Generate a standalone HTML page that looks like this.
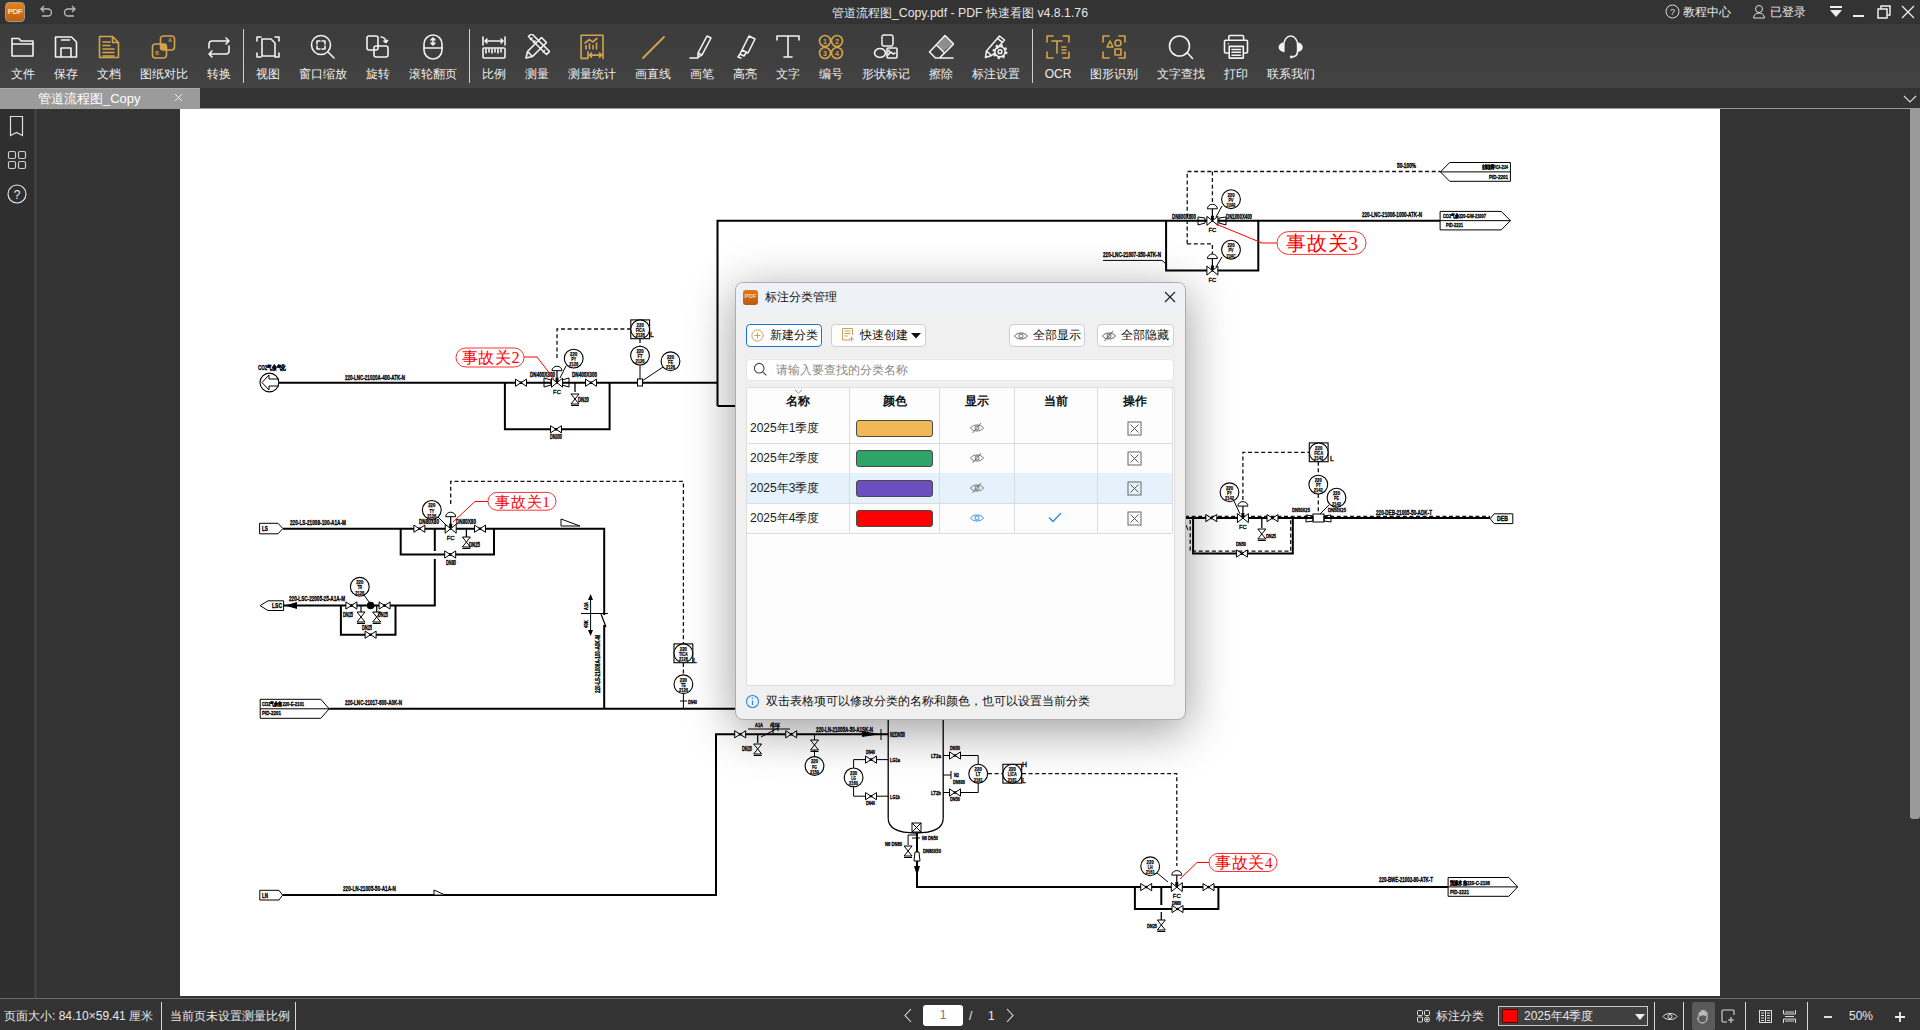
<!DOCTYPE html>
<html><head><meta charset="utf-8">
<style>
*{margin:0;padding:0;box-sizing:border-box}
html,body{width:1920px;height:1030px;overflow:hidden;background:#333;font-family:"Liberation Sans",sans-serif;position:relative}
.abs{position:absolute}
.tb{position:absolute;top:24px;height:64px;text-align:center;color:#efefef;font-size:12px;line-height:16px}
.tb svg{position:absolute}
.tb span{position:absolute;left:0;right:0;top:42px;white-space:nowrap}
</style></head><body>
<div class="abs" style="left:0;top:0;width:1920px;height:24px;background:#333"></div>
<div class="abs" style="left:0;top:24px;width:1920px;height:64px;background:linear-gradient(#3b3b3b,#434343)"></div>
<div class="abs" style="left:0;top:88px;width:1920px;height:21px;background:#333"></div>
<div class="abs" style="left:0;top:88px;width:200px;height:21px;background:#9b9b9b;border-top:1px solid #aaa"></div>
<div class="abs" style="left:0;top:109px;width:34px;height:889px;background:#2f2f2f"></div>
<div class="abs" style="left:34px;top:109px;width:3px;height:889px;background:#404040"></div>
<div class="abs" style="left:37px;top:109px;width:1883px;height:889px;background:#333"></div>
<div class="abs" style="left:180px;top:109px;width:1540px;height:887px;background:#fff"></div>
<div class="abs" style="left:0;top:998px;width:1920px;height:32px;background:#333;border-top:1px solid #6b6b6b"></div>

<div class="abs" style="left:5px;top:2px;width:20px;height:20px;border-radius:4px;background:linear-gradient(#e8801a,#c0600c);border:1px solid #999"></div>
<div class="abs" style="left:5px;top:7px;width:20px;text-align:center;font-size:8px;font-weight:bold;color:#f4e0c8;letter-spacing:-0.5px">PDF</div>
<svg class="abs" style="left:38px;top:4px" width="16" height="16" viewBox="0 0 16 16"><path d="M3 5h7a3.5 3.5 0 0 1 0 7H4 M6 2L3 5l3 3" fill="none" stroke="#bbb" stroke-width="1.3"/></svg>
<svg class="abs" style="left:62px;top:4px" width="16" height="16" viewBox="0 0 16 16"><path d="M13 5H6a3.5 3.5 0 0 0 0 7h6 M10 2l3 3-3 3" fill="none" stroke="#bbb" stroke-width="1.3"/></svg>
<div class="abs" style="left:660px;width:600px;top:5px;text-align:center;font-size:12.3px;color:#e6e6e6;line-height:16px">管道流程图_Copy.pdf - PDF 快速看图 v4.8.1.76</div>
<svg class="abs" style="left:1665px;top:4px" width="15" height="15" viewBox="0 0 15 15"><circle cx="7.5" cy="7.5" r="6.5" fill="none" stroke="#ddd" stroke-width="1"/><text x="7.5" y="11" font-size="9" fill="#ddd" text-anchor="middle" font-family="Liberation Sans">?</text></svg>
<div class="abs" style="left:1683px;top:4px;font-size:12px;color:#e6e6e6;line-height:16px">教程中心</div>
<svg class="abs" style="left:1752px;top:4px" width="14" height="15" viewBox="0 0 14 15"><circle cx="7" cy="5" r="3.5" fill="none" stroke="#ddd"/><path d="M1.5 14c0-3 2.5-5 5.5-5s5.5 2 5.5 5z" fill="none" stroke="#ddd"/></svg>
<div class="abs" style="left:1770px;top:4px;font-size:12px;color:#e6e6e6;line-height:16px">已登录</div>
<svg class="abs" style="left:1829px;top:5px" width="14" height="14" viewBox="0 0 14 14"><rect x="1" y="1" width="12" height="2" fill="#eee"/><path d="M1 5h12l-6 7z" fill="#eee"/></svg>
<div class="abs" style="left:1853px;top:15px;width:11px;height:2px;background:#eee"></div>
<svg class="abs" style="left:1877px;top:5px" width="14" height="14" viewBox="0 0 14 14"><path d="M4 4V1h9v9h-3 M1 4h9v9H1z" fill="none" stroke="#eee" stroke-width="1.5"/></svg>
<svg class="abs" style="left:1901px;top:5px" width="14" height="14" viewBox="0 0 14 14"><path d="M1 1l12 12M13 1L1 13" stroke="#eee" stroke-width="1.3"/></svg>
<div class="tb" style="left:-17.5px;width:80px"><svg width="26" height="26" viewBox="0 0 26 26" style="left:27px;top:10px"><path fill="none" stroke="#f2f2f2" stroke-width="1.6" stroke-linejoin="round" stroke-linecap="round" d="M2 4.5h7l2 2.5h12v15H2z M2 10h21"/></svg><span>文件</span></div><div class="tb" style="left:26px;width:80px"><svg width="26" height="26" viewBox="0 0 26 26" style="left:27px;top:10px"><path fill="none" stroke="#f2f2f2" stroke-width="1.6" stroke-linejoin="round" stroke-linecap="round" d="M2.5 3h16l5 5v15h-21z M8 23v-9h10v9 M8.5 6h8"/></svg><span>保存</span></div><div class="tb" style="left:69px;width:80px"><svg width="26" height="26" viewBox="0 0 26 26" style="left:27px;top:10px"><path fill="none" stroke="#d3a44a" stroke-width="1.6" stroke-linejoin="round" stroke-linecap="round" d="M3.5 2.5h13l6 6v15h-19z M16.5 2.5v6h6"/><path fill="none" stroke="#d3a44a" stroke-width="1.6" stroke-linejoin="round" stroke-linecap="round" d="M7 8h7M7 11.5h7M7 15h11M7 18.5h11M7 22h11" stroke-width="1.4"/></svg><span>文档</span></div><div class="tb" style="left:123.5px;width:80px"><svg width="26" height="26" viewBox="0 0 26 26" style="left:27px;top:10px"><rect fill="none" stroke="#d3a44a" stroke-width="1.6" stroke-linejoin="round" stroke-linecap="round" x="9.5" y="2" width="14" height="14" rx="3"/><rect fill="none" stroke="#d3a44a" stroke-width="1.6" stroke-linejoin="round" stroke-linecap="round" x="1.5" y="10" width="14" height="14" rx="3"/><rect x="9.5" y="10" width="6" height="6" fill="#d3a44a"/><text x="19" y="8" font-size="5" fill="#d3a44a" font-family="Liberation Sans" text-anchor="middle" font-weight="bold">A</text><text x="6" y="21" font-size="5" fill="#d3a44a" font-family="Liberation Sans" text-anchor="middle" font-weight="bold">B</text></svg><span>图纸对比</span></div><div class="tb" style="left:178.5px;width:80px"><svg width="26" height="26" viewBox="0 0 26 26" style="left:27px;top:10px"><path fill="none" stroke="#f2f2f2" stroke-width="1.6" stroke-linejoin="round" stroke-linecap="round" d="M3 14v-4a3 3 0 0 1 3-3h17 M20 4l3 3-3 3 M23 12v5a3 3 0 0 1-3 3H3 M6 17l-3 3 3 3"/></svg><span>转换</span></div><div class="tb" style="left:227.5px;width:80px"><svg width="26" height="26" viewBox="0 0 26 26" style="left:27px;top:10px"><path fill="none" stroke="#f2f2f2" stroke-width="1.6" stroke-linejoin="round" stroke-linecap="round" d="M2 7V3h4M20 3h4v4M24 19v4h-4M6 23H2v-4 M7 5h9l4 4v13H7z"/></svg><span>视图</span></div><div class="tb" style="left:282.5px;width:80px"><svg width="26" height="26" viewBox="0 0 26 26" style="left:27px;top:10px"><circle fill="none" stroke="#f2f2f2" stroke-width="1.6" stroke-linejoin="round" stroke-linecap="round" cx="11" cy="11" r="9.5"/><path fill="none" stroke="#f2f2f2" stroke-width="1.6" stroke-linejoin="round" stroke-linecap="round" d="M18 18l6 6 M7 10V7h3M12 7h3v3M15 12v3h-3M10 15H7v-3"/></svg><span>窗口缩放</span></div><div class="tb" style="left:337.5px;width:80px"><svg width="26" height="26" viewBox="0 0 26 26" style="left:27px;top:10px"><rect fill="none" stroke="#f2f2f2" stroke-width="1.6" stroke-linejoin="round" stroke-linecap="round" x="2" y="2" width="11" height="14" rx="2"/><rect fill="none" stroke="#f2f2f2" stroke-width="1.6" stroke-linejoin="round" stroke-linecap="round" x="9" y="12" width="14" height="11" rx="2"/><path fill="none" stroke="#f2f2f2" stroke-width="1.6" stroke-linejoin="round" stroke-linecap="round" d="M16 3a5 5 0 0 1 5 5 M19 7l2 1.5 1.5-2"/></svg><span>旋转</span></div><div class="tb" style="left:392.5px;width:80px"><svg width="26" height="26" viewBox="0 0 26 26" style="left:27px;top:10px"><rect fill="none" stroke="#f2f2f2" stroke-width="1.6" stroke-linejoin="round" stroke-linecap="round" x="4" y="1" width="18" height="24" rx="9"/><path fill="none" stroke="#f2f2f2" stroke-width="1.6" stroke-linejoin="round" stroke-linecap="round" d="M4 14h18 M13 4v7 M11 6l2-2 2 2 M11 9l2 2 2-2"/></svg><span>滚轮翻页</span></div><div class="tb" style="left:454px;width:80px"><svg width="26" height="26" viewBox="0 0 26 26" style="left:27px;top:10px"><path fill="none" stroke="#f2f2f2" stroke-width="1.6" stroke-linejoin="round" stroke-linecap="round" d="M2 3v8M24 3v8 M4 7h18 M6 5l-2 2 2 2M20 5l2 2-2 2"/><rect fill="none" stroke="#f2f2f2" stroke-width="1.6" stroke-linejoin="round" stroke-linecap="round" x="2" y="14" width="22" height="10" rx="1"/><path fill="none" stroke="#f2f2f2" stroke-width="1.6" stroke-linejoin="round" stroke-linecap="round" d="M5 15v4M8 15v3M11 15v4M14 15v3M17 15v4M20 15v3" stroke-width="1.2"/></svg><span>比例</span></div><div class="tb" style="left:497px;width:80px"><svg width="26" height="26" viewBox="0 0 26 26" style="left:27px;top:10px"><path fill="none" stroke="#f2f2f2" stroke-width="1.6" stroke-linejoin="round" stroke-linecap="round" d="M4.5 2.5l3-3 18 18-3 3z M6.5 5.5l1.5-1.5 M9.5 8.5l1.5-1.5 M16 15l1.5-1.5 M19 18l1.5-1.5"/><path fill="none" stroke="#f2f2f2" stroke-width="1.6" stroke-linejoin="round" stroke-linecap="round" d="M2 24l1.5-6.5L17.5 3.5l5 5-14 14z M3.5 17.5l5 5"/></svg><span>测量</span></div><div class="tb" style="left:552px;width:80px"><svg width="26" height="26" viewBox="0 0 26 26" style="left:27px;top:10px"><path fill="none" stroke="#d3a44a" stroke-width="1.6" stroke-linejoin="round" stroke-linecap="round" d="M8.5 24.4H2.1V1.3H24V16.5 M9 17.8V24.4 M24 17.8V24.4 M10.5 21.1H22.5 M12.5 19.1l-2 2 2 2 M20.5 19.1l2 2-2 2 M6 9l4.5-3.5 3 2.5 4.5-3.5"/><path fill="none" stroke="#d3a44a" stroke-width="1.6" stroke-linejoin="round" stroke-linecap="round" d="M7 11.5v3.5 M10.5 10v5 M14 11.5v3.5 M17.5 9v6" stroke-width="1.8" stroke-linecap="butt"/></svg><span>测量统计</span></div><div class="tb" style="left:613px;width:80px"><svg width="26" height="26" viewBox="0 0 26 26" style="left:27px;top:10px"><path fill="none" stroke="#d3a44a" stroke-width="1.8" stroke-linecap="round" d="M3 24L24 3"/></svg><span>画直线</span></div><div class="tb" style="left:662px;width:80px"><svg width="26" height="26" viewBox="0 0 26 26" style="left:27px;top:10px"><path fill="none" stroke="#f2f2f2" stroke-width="1.6" stroke-linejoin="round" stroke-linecap="round" d="M18 2l4 2-9 17-4 2 0-4z M9 19l4 2 M1 24h8"/></svg><span>画笔</span></div><div class="tb" style="left:705px;width:80px"><svg width="26" height="26" viewBox="0 0 26 26" style="left:27px;top:10px"><path fill="none" stroke="#f2f2f2" stroke-width="1.6" stroke-linejoin="round" stroke-linecap="round" d="M17 2l6 3-7 14-6-3z M10 16l-2 4 4 2 2-3 M8 20l-2 3 3 1"/></svg><span>高亮</span></div><div class="tb" style="left:748px;width:80px"><svg width="26" height="26" viewBox="0 0 26 26" style="left:27px;top:10px"><path fill="none" stroke="#f2f2f2" stroke-width="1.6" stroke-linejoin="round" stroke-linecap="round" d="M2 6V2h22v4 M13 2v21 M9 23h8"/></svg><span>文字</span></div><div class="tb" style="left:791px;width:80px"><svg width="26" height="26" viewBox="0 0 26 26" style="left:27px;top:10px"><g fill="none" stroke="#d3a44a" stroke-width="1.6" stroke-linejoin="round" stroke-linecap="round"><circle cx="7" cy="7" r="5.5"/><circle cx="19" cy="7" r="5.5"/><circle cx="7" cy="19" r="5.5"/><circle cx="19" cy="19" r="5.5"/></g><g fill="#d3a44a" font-size="7" font-family="Liberation Sans" text-anchor="middle" font-weight="bold"><text x="7" y="9.5">1</text><text x="19" y="9.5">2</text><text x="7" y="21.5">3</text><text x="19" y="21.5">4</text></g></svg><span>编号</span></div><div class="tb" style="left:846px;width:80px"><svg width="26" height="26" viewBox="0 0 26 26" style="left:27px;top:10px"><rect fill="none" stroke="#f2f2f2" stroke-width="1.6" stroke-linejoin="round" stroke-linecap="round" x="9" y="1" width="11" height="11" rx="2" stroke-dasharray="1.5 1"/><ellipse fill="none" stroke="#f2f2f2" stroke-width="1.6" stroke-linejoin="round" stroke-linecap="round" cx="7" cy="19" rx="5.5" ry="4.5"/><rect fill="none" stroke="#f2f2f2" stroke-width="1.6" stroke-linejoin="round" stroke-linecap="round" x="14" y="14" width="10" height="10" rx="1"/><path fill="none" stroke="#f2f2f2" stroke-width="1.6" stroke-linejoin="round" stroke-linecap="round" d="M15 21l3-3 2 2 2-1 M16 16v2" stroke-width="1.2"/></svg><span>形状标记</span></div><div class="tb" style="left:901px;width:80px"><svg width="26" height="26" viewBox="0 0 26 26" style="left:27px;top:10px"><path fill="none" stroke="#f2f2f2" stroke-width="1.6" stroke-linejoin="round" stroke-linecap="round" d="M17 1.5L25.5 10 11.5 24H7.5L1.5 18Z M8.5 11L15.5 18 M11.5 24H25"/><path d="M17 2.5L24.5 10 15.5 17.2 9.3 11Z" fill="#f2f2f2" opacity=".45"/></svg><span>擦除</span></div><div class="tb" style="left:956px;width:80px"><svg width="26" height="26" viewBox="0 0 26 26" style="left:27px;top:10px"><path fill="none" stroke="#f2f2f2" stroke-width="1.6" stroke-linejoin="round" stroke-linecap="round" d="M2.5 23.5L3.5 17 16.5 2 21.5 6 14 14.5 M3.5 17L8 21 M2.5 23.5L8.5 21.5 11 19.5 M14.5 4.3L19.5 8.3"/><circle cx="17" cy="17.7" r="5.2" fill="none" stroke="#f2f2f2" stroke-width="1.6"/><circle cx="17" cy="17.7" r="6.4" fill="none" stroke="#f2f2f2" stroke-width="2.2" stroke-dasharray="2.2 2.8"/><circle cx="17" cy="17.7" r="1.9" fill="none" stroke="#f2f2f2" stroke-width="1.5"/></svg><span>标注设置</span></div><div class="tb" style="left:1018px;width:80px"><svg width="26" height="26" viewBox="0 0 26 26" style="left:27px;top:10px"><path fill="none" stroke="#d3a44a" stroke-width="1.6" stroke-linejoin="round" stroke-linecap="round" d="M2 8V2h6M18 2h6v6M24 18v6h-6M8 24H2v-6 M7 7h10 M12 7v12 M17 13h4M17 16h4M17 19h4"/></svg><span>OCR</span></div><div class="tb" style="left:1074px;width:80px"><svg width="26" height="26" viewBox="0 0 26 26" style="left:27px;top:10px"><path fill="none" stroke="#d3a44a" stroke-width="1.6" stroke-linejoin="round" stroke-linecap="round" d="M2 8V2h6M18 2h6v6M24 18v6h-6M8 24H2v-6 M6 13l3-6 3 6z"/><circle fill="none" stroke="#d3a44a" stroke-width="1.6" stroke-linejoin="round" stroke-linecap="round" cx="17" cy="9" r="3"/><rect fill="none" stroke="#d3a44a" stroke-width="1.6" stroke-linejoin="round" stroke-linecap="round" x="14" y="15" width="6" height="6"/></svg><span>图形识别</span></div><div class="tb" style="left:1141px;width:80px"><svg width="26" height="26" viewBox="0 0 26 26" style="left:27px;top:10px"><circle fill="none" stroke="#f2f2f2" stroke-width="1.6" stroke-linejoin="round" stroke-linecap="round" cx="11.5" cy="12" r="10"/><path fill="none" stroke="#f2f2f2" stroke-width="1.6" stroke-linejoin="round" stroke-linecap="round" d="M19 18.5l5.5 6"/></svg><span>文字查找</span></div><div class="tb" style="left:1196px;width:80px"><svg width="26" height="26" viewBox="0 0 26 26" style="left:27px;top:10px"><path fill="none" stroke="#f2f2f2" stroke-width="1.6" stroke-linejoin="round" stroke-linecap="round" d="M5.8 6.2V2.5a1 1 0 0 1 1-1h12.8a1 1 0 0 1 1 1v3.7 M6 19H2.5a1 1 0 0 1-1-1V7.2a1 1 0 0 1 1-1h21a1 1 0 0 1 1 1V18a1 1 0 0 1-1 1H20.5 M6.2 12.4h14.1v11.7H6.2z M9 15.5h8.5M9 18.3h8.5M9 21.2h8.5"/><circle cx="5.4" cy="9.7" r=".7" fill="#f2f2f2"/></svg><span>打印</span></div><div class="tb" style="left:1251px;width:80px"><svg width="26" height="26" viewBox="0 0 26 26" style="left:27px;top:10px"><path fill="none" stroke="#f2f2f2" stroke-width="1.6" stroke-linejoin="round" stroke-linecap="round" d="M5.8 17.5V11A6.9 9 0 0 1 19.6 11V17.5 M19.6 17Q19.6 23 13.5 23"/><path d="M5.8 8.5A5.2 4.7 0 0 0 5.8 17.9Z M19.6 8.5A5.2 4.7 0 0 1 19.6 17.9Z" fill="#f2f2f2"/><circle cx="13.3" cy="23" r="1.4" fill="#f2f2f2"/></svg><span>联系我们</span></div><div class="abs" style="left:243px;top:29px;width:1px;height:54px;background:#cfcfcf"></div><div class="abs" style="left:469px;top:29px;width:1px;height:54px;background:#cfcfcf"></div><div class="abs" style="left:1032px;top:29px;width:1px;height:54px;background:#cfcfcf"></div>
<div class="abs" style="left:38px;top:90px;font-size:13px;color:#fff;line-height:18px">管道流程图_Copy</div>
<svg class="abs" style="left:174px;top:93px" width="9" height="9" viewBox="0 0 9 9"><path d="M1 1l7 7M8 1L1 8" stroke="#eee" stroke-width="1"/></svg>
<svg class="abs" style="left:1903px;top:95px" width="14" height="9" viewBox="0 0 14 9"><path d="M1 1l6 6 6-6" fill="none" stroke="#ddd" stroke-width="1.1"/></svg>
<div class="abs" style="left:200px;top:108px;width:1720px;height:1px;background:#9a9a9a"></div>
<div class="abs" style="left:1910px;top:109px;width:10px;height:710px;background:#9a9a9a;border-radius:0 0 3px 3px"></div>

<svg class="abs" style="left:8px;top:115px" width="18" height="22" viewBox="0 0 18 22"><path d="M2.5 1.5h12v19l-6-3-6 3z" fill="none" stroke="#ddd" stroke-width="1.2"/></svg>
<svg class="abs" style="left:7px;top:150px" width="20" height="20" viewBox="0 0 20 20"><g fill="none" stroke="#ccc" stroke-width="1.2"><rect x="1.5" y="1.5" width="7" height="7" rx="1.5"/><rect x="11.5" y="1.5" width="7" height="7" rx="1.5"/><rect x="1.5" y="11.5" width="7" height="7" rx="1.5"/><rect x="11.5" y="11.5" width="7" height="7" rx="1.5"/></g></svg>
<svg class="abs" style="left:7px;top:184px" width="20" height="20" viewBox="0 0 20 20"><circle cx="10" cy="10" r="9" fill="none" stroke="#eee" stroke-width="1.1"/><text x="10" y="14.5" font-size="12" fill="#eee" text-anchor="middle" font-family="Liberation Sans">?</text></svg>

<div class="abs" style="left:4px;top:1008px;font-size:12px;color:#e8e8e8;line-height:16px;white-space:nowrap">页面大小: 84.10×59.41 厘米</div>
<div class="abs" style="left:161px;top:1002px;width:1px;height:28px;background:#d8d8d8"></div>
<div class="abs" style="left:170px;top:1008px;font-size:12px;color:#e8e8e8;line-height:16px;white-space:nowrap">当前页未设置测量比例</div>
<div class="abs" style="left:295px;top:1002px;width:1px;height:28px;background:#d8d8d8"></div>
<svg class="abs" style="left:903px;top:1008px" width="10" height="15" viewBox="0 0 10 15"><path d="M8 1L2 7.5 8 14" fill="none" stroke="#ddd" stroke-width="1.1"/></svg>
<div class="abs" style="left:923px;top:1005px;width:40px;height:21px;background:#fff;border-radius:3px;text-align:center;font-size:12px;line-height:21px;color:#777">1</div>
<div class="abs" style="left:969px;top:1008px;font-size:12px;color:#e8e8e8;line-height:16px">/</div>
<div class="abs" style="left:988px;top:1008px;font-size:12px;color:#e8e8e8;line-height:16px">1</div>
<svg class="abs" style="left:1005px;top:1008px" width="10" height="15" viewBox="0 0 10 15"><path d="M2 1l6 6.5L2 14" fill="none" stroke="#ddd" stroke-width="1.1"/></svg>
<svg class="abs" style="left:1417px;top:1010px" width="14" height="13" viewBox="0 0 14 13"><g fill="none" stroke="#ddd" stroke-width="1"><rect x=".5" y=".5" width="5" height="5" rx="1"/><rect x="7.5" y=".5" width="5" height="5" rx="1"/><rect x=".5" y="7" width="5" height="5" rx="1"/><circle cx="10" cy="9.5" r="2.5"/><path d="M10 8v3M8.5 9.5h3"/></g></svg>
<div class="abs" style="left:1436px;top:1008px;font-size:12px;color:#e8e8e8;line-height:16px;white-space:nowrap">标注分类</div>
<div class="abs" style="left:1498px;top:1006px;width:150px;height:20px;border:1px solid #c8c8c8;background:#404040"></div>
<div class="abs" style="left:1502px;top:1009px;width:16px;height:14px;background:#f00;border:1px solid #600"></div>
<div class="abs" style="left:1524px;top:1008px;font-size:12px;color:#e8e8e8;line-height:16px;white-space:nowrap">2025年4季度</div>
<svg class="abs" style="left:1635px;top:1014px" width="10" height="7" viewBox="0 0 10 7"><path d="M0 0h10L5 6z" fill="#eee"/></svg>
<div class="abs" style="left:1654px;top:1002px;width:1px;height:28px;background:#d8d8d8"></div>
<svg class="abs" style="left:1662px;top:1011px" width="16" height="11" viewBox="0 0 16 11"><path d="M1 5.5C3.5 1.5 12.5 1.5 15 5.5 12.5 9.5 3.5 9.5 1 5.5z" fill="none" stroke="#ddd" stroke-width="1"/><circle cx="8" cy="5.5" r="2" fill="none" stroke="#ddd"/></svg>
<div class="abs" style="left:1683px;top:1002px;width:1px;height:28px;background:#d8d8d8"></div>
<div class="abs" style="left:1692px;top:1002px;width:23px;height:28px;background:#5a5a5a;border-radius:2px"></div>
<svg class="abs" style="left:1696px;top:1009px" width="14" height="15" viewBox="0 0 14 15"><path d="M3 8V4.5a1 1 0 0 1 2 0V7 M5 6.5V2.5a1 1 0 0 1 2 0V6.5 M7 6V2.5a1 1 0 0 1 2 0V7 M9 6.5V4a1 1 0 0 1 2 0v5c0 3-2 5-4.5 5S2 12.5 2 10V8" fill="none" stroke="#ddd" stroke-width="1"/></svg>
<svg class="abs" style="left:1721px;top:1009px" width="15" height="15" viewBox="0 0 15 15"><path d="M6 13H2a1 1 0 0 1-1-1V2a1 1 0 0 1 1-1h10a1 1 0 0 1 1 1v4 M10 8v6M7 11h6" fill="none" stroke="#ddd" stroke-width="1.1"/></svg>
<div class="abs" style="left:1745px;top:1002px;width:1px;height:28px;background:#d8d8d8"></div>
<svg class="abs" style="left:1759px;top:1010px" width="13" height="13" viewBox="0 0 13 13"><g fill="none" stroke="#ddd" stroke-width="1"><rect x=".5" y=".5" width="12" height="12"/><path d="M6.5 .5v12 M2 3h3M2 5.5h3M2 8h3M2 10.5h3 M8 3h3M8 5.5h3M8 8h3M8 10.5h3"/></g></svg>
<svg class="abs" style="left:1783px;top:1010px" width="13" height="13" viewBox="0 0 13 13"><g fill="none" stroke="#ddd" stroke-width="1"><path d="M.5 0v4h12V0 M.5 13V9h12v4 M2 6.5h9 M2 2h9M2 11h9"/></g></svg>
<div class="abs" style="left:1807px;top:1002px;width:1px;height:28px;background:#d8d8d8"></div>
<div class="abs" style="left:1824px;top:1016px;width:8px;height:2px;background:#ddd"></div>
<div class="abs" style="left:1849px;top:1008px;font-size:12px;color:#e8e8e8;line-height:16px">50%</div>
<svg class="abs" style="left:1894px;top:1011px" width="12" height="12" viewBox="0 0 12 12"><path d="M6 1v10M1 6h10" stroke="#eee" stroke-width="1.8"/></svg>
<svg class="abs" style="left:0;top:0" width="1920" height="1030" viewBox="0 0 1920 1030"><circle cx="269.4" cy="382.5" r="9.4" fill="#fff" stroke="#000" stroke-width="1.1"/><path d="M262,382.5 L269,375 L269,379 L279,379" fill="none" stroke="#000" stroke-width="1" stroke-linejoin="miter"/><path d="M262,382.5 L269,390 L269,386 L279,386" fill="none" stroke="#000" stroke-width="1" stroke-linejoin="miter"/><text x="258" y="370" font-size="6.8" text-anchor="start" font-family="Liberation Sans" font-weight="bold" stroke="#000" stroke-width="0.35" textLength="28" lengthAdjust="spacingAndGlyphs">CO2气余气化</text><path d="M279,382.7 L717.5,382.7" fill="none" stroke="#000" stroke-width="2" stroke-linejoin="miter"/><path d="M717.5,406 L717.5,220.8 L1440,220.8" fill="none" stroke="#000" stroke-width="2" stroke-linejoin="miter"/><path d="M504.9,382.7 L504.9,429.3 L609.6,429.3 L609.6,382.7" fill="none" stroke="#000" stroke-width="2" stroke-linejoin="miter"/><text x="345" y="380" font-size="7.5" text-anchor="start" font-family="Liberation Sans" font-weight="bold" stroke="#000" stroke-width="0.35" textLength="60" lengthAdjust="spacingAndGlyphs">220-LNC-21020A-400-ATK-N</text><path d="M515.5,379.09999999999997 L526.5,386.3 L526.5,379.09999999999997 L515.5,386.3 Z" fill="#fff" stroke="#000" stroke-width="1"/><circle cx="521" cy="382.7" r="1.3" fill="#000"/><path d="M585.5,379.09999999999997 L596.5,386.3 L596.5,379.09999999999997 L585.5,386.3 Z" fill="#fff" stroke="#000" stroke-width="1"/><circle cx="591" cy="382.7" r="1.3" fill="#000"/><path d="M550.5,425.7 L561.5,432.90000000000003 L561.5,425.7 L550.5,432.90000000000003 Z" fill="#fff" stroke="#000" stroke-width="1"/><circle cx="556" cy="429.3" r="1.3" fill="#000"/><path d="M544,378 L551,380 L551,385 L544,387 L544,378" fill="none" stroke="#000" stroke-width="1" stroke-linejoin="miter"/><path d="M569,378 L562,380 L562,385 L569,387 L569,378" fill="none" stroke="#000" stroke-width="1" stroke-linejoin="miter"/><path d="M551.5,378.2 L562.5,387.2 L562.5,378.2 L551.5,387.2 Z" fill="#fff" stroke="#000" stroke-width="1"/><path d="M557,382.7 V370.7" stroke="#000" stroke-width="1.2"/><path d="M552,370.7 A5,4.5 0 0 1 562,370.7 Z" fill="#fff" stroke="#000" stroke-width="1"/><rect x="555.5" y="377.7" width="3" height="4" fill="#000"/><text x="557" y="393.7" font-size="6" text-anchor="middle" font-family="Liberation Sans" fill="#000" stroke="#000" stroke-width="0.3">FC</text><path d="M557,358 L557,329 L631,329" fill="none" stroke="#111" stroke-width="1.3" stroke-dasharray="4 2.6" stroke-linejoin="miter"/><circle cx="573.7" cy="358.6" r="9.4" fill="#fff" stroke="#000" stroke-width="1.1"/><text x="573.7" y="356.0" font-size="5.6" text-anchor="middle" font-family="Liberation Sans" font-weight="bold" stroke="#000" stroke-width="0.25" textLength="7.199999999999999" lengthAdjust="spacingAndGlyphs">220</text><text x="573.7" y="361.2" font-size="5.6" text-anchor="middle" font-family="Liberation Sans" font-weight="bold" stroke="#000" stroke-width="0.25" textLength="4.8" lengthAdjust="spacingAndGlyphs">PY</text><text x="573.7" y="366.4" font-size="5.6" text-anchor="middle" font-family="Liberation Sans" font-weight="bold" stroke="#000" stroke-width="0.25" textLength="9" lengthAdjust="spacingAndGlyphs">2126</text><path d="M566,366 L560,378" fill="none" stroke="#000" stroke-width="1" stroke-linejoin="miter"/><path d="M575,382.7 L575,392" fill="none" stroke="#000" stroke-width="1.3" stroke-linejoin="miter"/><path d="M571,394 L579,404 L571,404 L579,394 Z" fill="#fff" stroke="#000" stroke-width="1"/><path d="M571,405.5 h8" stroke="#000" stroke-width="1"/><text x="578" y="402" font-size="6.8" text-anchor="start" font-family="Liberation Sans" font-weight="bold" stroke="#000" stroke-width="0.35" textLength="11" lengthAdjust="spacingAndGlyphs">DN20</text><text x="530" y="377" font-size="6.8" text-anchor="start" font-family="Liberation Sans" font-weight="bold" stroke="#000" stroke-width="0.35" textLength="25" lengthAdjust="spacingAndGlyphs">DN400X300</text><text x="572" y="377" font-size="6.8" text-anchor="start" font-family="Liberation Sans" font-weight="bold" stroke="#000" stroke-width="0.35" textLength="25" lengthAdjust="spacingAndGlyphs">DN400X300</text><text x="550" y="439" font-size="6.8" text-anchor="start" font-family="Liberation Sans" font-weight="bold" stroke="#000" stroke-width="0.35" textLength="12" lengthAdjust="spacingAndGlyphs">DN300</text><rect x="637.5" y="379" width="5" height="7" fill="#fff" stroke="#000" stroke-width="1"/><rect x="630.8000000000001" y="319.90000000000003" width="18.8" height="18.8" fill="#fff" stroke="#000" stroke-width="1.1"/><circle cx="640.2" cy="329.3" r="9.4" fill="#fff" stroke="#000" stroke-width="1.1"/><text x="640.2" y="326.7" font-size="5.6" text-anchor="middle" font-family="Liberation Sans" font-weight="bold" stroke="#000" stroke-width="0.25" textLength="7.199999999999999" lengthAdjust="spacingAndGlyphs">220</text><text x="640.2" y="331.9" font-size="5.6" text-anchor="middle" font-family="Liberation Sans" font-weight="bold" stroke="#000" stroke-width="0.25" textLength="9" lengthAdjust="spacingAndGlyphs">FICA</text><text x="640.2" y="337.09999999999997" font-size="5.6" text-anchor="middle" font-family="Liberation Sans" font-weight="bold" stroke="#000" stroke-width="0.25" textLength="9" lengthAdjust="spacingAndGlyphs">2126</text><text x="650" y="337" font-size="6.8" text-anchor="start" font-family="Liberation Sans" font-weight="normal" stroke="#000" stroke-width="0.35">L</text><path d="M640,339 L640,346" fill="none" stroke="#111" stroke-width="1.3" stroke-dasharray="4 2.6" stroke-linejoin="miter"/><path d="M640,365 L640,379" fill="none" stroke="#000" stroke-width="1" stroke-linejoin="miter"/><circle cx="640" cy="355.6" r="9.4" fill="#fff" stroke="#000" stroke-width="1.1"/><text x="640" y="353.0" font-size="5.6" text-anchor="middle" font-family="Liberation Sans" font-weight="bold" stroke="#000" stroke-width="0.25" textLength="7.199999999999999" lengthAdjust="spacingAndGlyphs">220</text><text x="640" y="358.2" font-size="5.6" text-anchor="middle" font-family="Liberation Sans" font-weight="bold" stroke="#000" stroke-width="0.25" textLength="4.8" lengthAdjust="spacingAndGlyphs">FT</text><text x="640" y="363.4" font-size="5.6" text-anchor="middle" font-family="Liberation Sans" font-weight="bold" stroke="#000" stroke-width="0.25" textLength="9" lengthAdjust="spacingAndGlyphs">2126</text><circle cx="670.5" cy="361.3" r="9.4" fill="#fff" stroke="#000" stroke-width="1.1"/><text x="670.5" y="358.7" font-size="5.6" text-anchor="middle" font-family="Liberation Sans" font-weight="bold" stroke="#000" stroke-width="0.25" textLength="7.199999999999999" lengthAdjust="spacingAndGlyphs">220</text><text x="670.5" y="363.9" font-size="5.6" text-anchor="middle" font-family="Liberation Sans" font-weight="bold" stroke="#000" stroke-width="0.25" textLength="4.8" lengthAdjust="spacingAndGlyphs">FE</text><text x="670.5" y="369.09999999999997" font-size="5.6" text-anchor="middle" font-family="Liberation Sans" font-weight="bold" stroke="#000" stroke-width="0.25" textLength="9" lengthAdjust="spacingAndGlyphs">2126</text><path d="M642,381 L663,367" fill="none" stroke="#000" stroke-width="1" stroke-linejoin="miter"/><path d="M524,357 L537,357 L554,379" fill="none" stroke="#f00" stroke-width="1"/><rect x="456" y="348" width="68" height="19" rx="9.5" fill="#fff" stroke="#f33" stroke-width="1"/><text x="491.0" y="363.2" font-size="16.3" letter-spacing="0.6" text-anchor="middle" fill="#f00" font-family="Liberation Serif, serif">事故关2</text><path d="M717.5,406 L740,406" fill="none" stroke="#000" stroke-width="2" stroke-linejoin="miter"/><path d="M1166.1,220.8 L1166.1,270.6 L1258.3,270.6 L1258.3,220.8" fill="none" stroke="#000" stroke-width="2" stroke-linejoin="miter"/><path d="M1440,220.8 L1440,220.8" fill="none" stroke="#000" stroke-width="2" stroke-linejoin="miter"/><path d="M1198,217 L1205,218 L1205,223 L1198,225 L1198,217" fill="none" stroke="#000" stroke-width="1" stroke-linejoin="miter"/><path d="M1226,217 L1219,218 L1219,223 L1226,225 L1226,217" fill="none" stroke="#000" stroke-width="1" stroke-linejoin="miter"/><path d="M1206.9,216.3 L1217.9,225.3 L1217.9,216.3 L1206.9,225.3 Z" fill="#fff" stroke="#000" stroke-width="1"/><path d="M1212.4,220.8 V208.8" stroke="#000" stroke-width="1.2"/><path d="M1207.4,208.8 A5,4.5 0 0 1 1217.4,208.8 Z" fill="#fff" stroke="#000" stroke-width="1"/><rect x="1210.9" y="215.8" width="3" height="4" fill="#000"/><text x="1212.4" y="231.8" font-size="6" text-anchor="middle" font-family="Liberation Sans" fill="#000" stroke="#000" stroke-width="0.3">FC</text><path d="M1206.9,266.1 L1217.9,275.1 L1217.9,266.1 L1206.9,275.1 Z" fill="#fff" stroke="#000" stroke-width="1"/><path d="M1212.4,270.6 V258.6" stroke="#000" stroke-width="1.2"/><path d="M1207.4,258.6 A5,4.5 0 0 1 1217.4,258.6 Z" fill="#fff" stroke="#000" stroke-width="1"/><rect x="1210.9" y="265.6" width="3" height="4" fill="#000"/><text x="1212.4" y="281.6" font-size="6" text-anchor="middle" font-family="Liberation Sans" fill="#000" stroke="#000" stroke-width="0.3">FC</text><path d="M1187.2,243.8 L1187.2,171.5 L1440.4,171.5" fill="none" stroke="#111" stroke-width="1.3" stroke-dasharray="4 2.6" stroke-linejoin="miter"/><path d="M1212.4,171.5 L1212.4,204" fill="none" stroke="#111" stroke-width="1.3" stroke-dasharray="4 2.6" stroke-linejoin="miter"/><path d="M1187.2,243.8 L1212.4,243.8 L1212.4,254" fill="none" stroke="#111" stroke-width="1.3" stroke-dasharray="4 2.6" stroke-linejoin="miter"/><circle cx="1231" cy="199.2" r="9.4" fill="#fff" stroke="#000" stroke-width="1.1"/><text x="1231" y="196.6" font-size="5.6" text-anchor="middle" font-family="Liberation Sans" font-weight="bold" stroke="#000" stroke-width="0.25" textLength="7.199999999999999" lengthAdjust="spacingAndGlyphs">220</text><text x="1231" y="201.79999999999998" font-size="5.6" text-anchor="middle" font-family="Liberation Sans" font-weight="bold" stroke="#000" stroke-width="0.25" textLength="4.8" lengthAdjust="spacingAndGlyphs">PV</text><text x="1231" y="207.0" font-size="5.6" text-anchor="middle" font-family="Liberation Sans" font-weight="bold" stroke="#000" stroke-width="0.25" textLength="9" lengthAdjust="spacingAndGlyphs">2104B</text><circle cx="1231" cy="249.7" r="9.4" fill="#fff" stroke="#000" stroke-width="1.1"/><text x="1231" y="247.1" font-size="5.6" text-anchor="middle" font-family="Liberation Sans" font-weight="bold" stroke="#000" stroke-width="0.25" textLength="7.199999999999999" lengthAdjust="spacingAndGlyphs">220</text><text x="1231" y="252.29999999999998" font-size="5.6" text-anchor="middle" font-family="Liberation Sans" font-weight="bold" stroke="#000" stroke-width="0.25" textLength="4.8" lengthAdjust="spacingAndGlyphs">PV</text><text x="1231" y="257.5" font-size="5.6" text-anchor="middle" font-family="Liberation Sans" font-weight="bold" stroke="#000" stroke-width="0.25" textLength="9" lengthAdjust="spacingAndGlyphs">2104C</text><path d="M1222,206 L1216,217" fill="none" stroke="#000" stroke-width="1" stroke-linejoin="miter"/><path d="M1222,257 L1216,267" fill="none" stroke="#000" stroke-width="1" stroke-linejoin="miter"/><text x="1103" y="257" font-size="7.5" text-anchor="start" font-family="Liberation Sans" font-weight="bold" stroke="#000" stroke-width="0.35" textLength="58" lengthAdjust="spacingAndGlyphs">220-LNC-21007-350-ATK-N</text><path d="M1103,260.4 L1162,260.4 L1166,264" fill="none" stroke="#000" stroke-width="1" stroke-linejoin="miter"/><text x="1172" y="219" font-size="6.8" text-anchor="start" font-family="Liberation Sans" font-weight="bold" stroke="#000" stroke-width="0.35" textLength="24" lengthAdjust="spacingAndGlyphs">DN800X600</text><text x="1226" y="219" font-size="6.8" text-anchor="start" font-family="Liberation Sans" font-weight="bold" stroke="#000" stroke-width="0.35" textLength="26" lengthAdjust="spacingAndGlyphs">DN1000X400</text><path d="M1216,224 L1262,243 L1277,243" fill="none" stroke="#f00" stroke-width="1"/><rect x="1277" y="231.6" width="89" height="22.80000000000001" rx="11.400000000000006" fill="#fff" stroke="#f33" stroke-width="1"/><text x="1322.5" y="249.8" font-size="19.6" letter-spacing="0.6" text-anchor="middle" fill="#f00" font-family="Liberation Serif, serif">事故关3</text><path d="M1440.4,171.9 L1449.7,162.5 H1510.4 V181.3 H1449.7 Z" fill="#fff" stroke="#000" stroke-width="1"/><path d="M1440.4,171.9 H1510.4" stroke="#000" stroke-width="1"/><text x="1397" y="168" font-size="6.8" text-anchor="start" font-family="Liberation Sans" font-weight="bold" stroke="#000" stroke-width="0.35" textLength="19" lengthAdjust="spacingAndGlyphs">50-100%</text><text x="1482" y="169" font-size="6.2" text-anchor="start" font-family="Liberation Sans" font-weight="bold" stroke="#000" stroke-width="0.35" textLength="26" lengthAdjust="spacingAndGlyphs">去卸放阀PICA-2104</text><text x="1489" y="179" font-size="6.2" text-anchor="start" font-family="Liberation Sans" font-weight="bold" stroke="#000" stroke-width="0.35" textLength="19" lengthAdjust="spacingAndGlyphs">PID-2201</text><path d="M1440.1,211.4 H1501.3 L1510.4,220.65 L1501.3,229.9 H1440.1 Z" fill="#fff" stroke="#000" stroke-width="1"/><path d="M1440.1,220.65 H1510.4" stroke="#000" stroke-width="1"/><text x="1362" y="217" font-size="7.5" text-anchor="start" font-family="Liberation Sans" font-weight="bold" stroke="#000" stroke-width="0.35" textLength="60" lengthAdjust="spacingAndGlyphs">220-LNC-21006-1000-ATK-N</text><text x="1443" y="218" font-size="6.2" text-anchor="start" font-family="Liberation Sans" font-weight="bold" stroke="#000" stroke-width="0.35" textLength="43" lengthAdjust="spacingAndGlyphs">CO2气余220-GW-21007</text><text x="1446" y="227" font-size="6.2" text-anchor="start" font-family="Liberation Sans" font-weight="bold" stroke="#000" stroke-width="0.35" textLength="17" lengthAdjust="spacingAndGlyphs">PID-2221</text><path d="M259.6,523.3 H278 L282.9,528.55 L278,533.8 H259.6 Z" fill="#fff" stroke="#000" stroke-width="1"/><text x="262" y="531" font-size="6.8" text-anchor="start" font-family="Liberation Sans" font-weight="bold" stroke="#000" stroke-width="0.35" textLength="6" lengthAdjust="spacingAndGlyphs">LS</text><path d="M283,528.7 L604.2,528.7 L604.2,708.7" fill="none" stroke="#000" stroke-width="2" stroke-linejoin="miter"/><path d="M400.7,528.7 L400.7,554.5 L494,554.5 L494,528.7" fill="none" stroke="#000" stroke-width="2" stroke-linejoin="miter"/><text x="290" y="525" font-size="7.5" text-anchor="start" font-family="Liberation Sans" font-weight="bold" stroke="#000" stroke-width="0.35" textLength="56" lengthAdjust="spacingAndGlyphs">220-LS-21008-100-A1A-M</text><path d="M413.9,525.1 L424.9,532.3000000000001 L424.9,525.1 L413.9,532.3000000000001 Z" fill="#fff" stroke="#000" stroke-width="1"/><circle cx="419.4" cy="528.7" r="1.3" fill="#000"/><path d="M474.5,525.1 L485.5,532.3000000000001 L485.5,525.1 L474.5,532.3000000000001 Z" fill="#fff" stroke="#000" stroke-width="1"/><circle cx="480" cy="528.7" r="1.3" fill="#000"/><path d="M444.7,550.9 L455.7,558.1 L455.7,550.9 L444.7,558.1 Z" fill="#fff" stroke="#000" stroke-width="1"/><circle cx="450.2" cy="554.5" r="1.3" fill="#000"/><path d="M434.8,528.7 L434.8,551" fill="none" stroke="#000" stroke-width="2" stroke-linejoin="miter"/><path d="M434.8,559 L434.8,605.5 L283.6,605.5" fill="none" stroke="#000" stroke-width="2" stroke-linejoin="miter"/><path d="M445.2,524.2 L456.2,533.2 L456.2,524.2 L445.2,533.2 Z" fill="#fff" stroke="#000" stroke-width="1"/><path d="M450.7,528.7 V516.7" stroke="#000" stroke-width="1.2"/><path d="M445.7,516.7 A5,4.5 0 0 1 455.7,516.7 Z" fill="#fff" stroke="#000" stroke-width="1"/><rect x="449.2" y="523.7" width="3" height="4" fill="#000"/><text x="450.7" y="539.7" font-size="6" text-anchor="middle" font-family="Liberation Sans" fill="#000" stroke="#000" stroke-width="0.3">FC</text><path d="M450.7,504 L450.7,481.4 L683.4,481.4 L683.4,644" fill="none" stroke="#111" stroke-width="1.3" stroke-dasharray="4 2.6" stroke-linejoin="miter"/><circle cx="431.8" cy="509.9" r="9.4" fill="#fff" stroke="#000" stroke-width="1.1"/><text x="431.8" y="507.29999999999995" font-size="5.6" text-anchor="middle" font-family="Liberation Sans" font-weight="bold" stroke="#000" stroke-width="0.25" textLength="7.199999999999999" lengthAdjust="spacingAndGlyphs">220</text><text x="431.8" y="512.5" font-size="5.6" text-anchor="middle" font-family="Liberation Sans" font-weight="bold" stroke="#000" stroke-width="0.25" textLength="4.8" lengthAdjust="spacingAndGlyphs">TY</text><text x="431.8" y="517.6999999999999" font-size="5.6" text-anchor="middle" font-family="Liberation Sans" font-weight="bold" stroke="#000" stroke-width="0.25" textLength="9" lengthAdjust="spacingAndGlyphs">2126</text><path d="M438,517 L447,526" fill="none" stroke="#000" stroke-width="1" stroke-linejoin="miter"/><path d="M466.4,528.7 L466.4,537" fill="none" stroke="#000" stroke-width="1.3" stroke-linejoin="miter"/><path d="M462.4,537 L470.4,547 L462.4,547 L470.4,537 Z" fill="#fff" stroke="#000" stroke-width="1"/><path d="M462.4,548.5 h8" stroke="#000" stroke-width="1"/><text x="469" y="547" font-size="6.8" text-anchor="start" font-family="Liberation Sans" font-weight="bold" stroke="#000" stroke-width="0.35" textLength="11" lengthAdjust="spacingAndGlyphs">DN25</text><text x="419" y="524" font-size="6.8" text-anchor="start" font-family="Liberation Sans" font-weight="bold" stroke="#000" stroke-width="0.35" textLength="20" lengthAdjust="spacingAndGlyphs">DN80X80</text><text x="456" y="524" font-size="6.8" text-anchor="start" font-family="Liberation Sans" font-weight="bold" stroke="#000" stroke-width="0.35" textLength="20" lengthAdjust="spacingAndGlyphs">DN80X80</text><text x="446" y="565" font-size="6.8" text-anchor="start" font-family="Liberation Sans" font-weight="bold" stroke="#000" stroke-width="0.35" textLength="10" lengthAdjust="spacingAndGlyphs">DN80</text><path d="M561,519 L561,526 L580,526 Z" fill="#fff" stroke="#000" stroke-width="1"/><path d="M453,522 L475,501.5 L488,501.5" fill="none" stroke="#f00" stroke-width="1"/><rect x="488" y="492.4" width="68" height="17.80000000000001" rx="8.900000000000006" fill="#fff" stroke="#f33" stroke-width="1"/><text x="523.0" y="506.6" font-size="15.3" letter-spacing="0.6" text-anchor="middle" fill="#f00" font-family="Liberation Serif, serif">事故关1</text><path d="M260.1,605.65 L268,600.8 H283.6 V610.5 H268 Z" fill="#fff" stroke="#000" stroke-width="1"/><text x="272" y="608" font-size="6.8" text-anchor="start" font-family="Liberation Sans" font-weight="bold" stroke="#000" stroke-width="0.35" textLength="10" lengthAdjust="spacingAndGlyphs">LSC</text><path d="M285,605.5 L297,602 L297,609 Z" fill="#000"/><text x="289" y="601" font-size="7.5" text-anchor="start" font-family="Liberation Sans" font-weight="bold" stroke="#000" stroke-width="0.35" textLength="56" lengthAdjust="spacingAndGlyphs">220-LSC-22005-25-A1A-M</text><path d="M340.9,605.5 L340.9,634.7 L395.5,634.7 L395.5,605.5" fill="none" stroke="#000" stroke-width="2" stroke-linejoin="miter"/><path d="M345.9,601.9 L356.9,609.1 L356.9,601.9 L345.9,609.1 Z" fill="#fff" stroke="#000" stroke-width="1"/><circle cx="351.4" cy="605.5" r="1.3" fill="#000"/><path d="M379.1,601.9 L390.1,609.1 L390.1,601.9 L379.1,609.1 Z" fill="#fff" stroke="#000" stroke-width="1"/><circle cx="384.6" cy="605.5" r="1.3" fill="#000"/><path d="M365.1,631.1 L376.1,638.3000000000001 L376.1,631.1 L365.1,638.3000000000001 Z" fill="#fff" stroke="#000" stroke-width="1"/><circle cx="370.6" cy="634.7" r="1.3" fill="#000"/><circle cx="370.6" cy="605.5" r="3.8" fill="#000"/><circle cx="359.8" cy="586.8" r="9.4" fill="#fff" stroke="#000" stroke-width="1.1"/><text x="359.8" y="584.1999999999999" font-size="5.6" text-anchor="middle" font-family="Liberation Sans" font-weight="bold" stroke="#000" stroke-width="0.25" textLength="7.199999999999999" lengthAdjust="spacingAndGlyphs">220</text><text x="359.8" y="589.4" font-size="5.6" text-anchor="middle" font-family="Liberation Sans" font-weight="bold" stroke="#000" stroke-width="0.25" textLength="4.8" lengthAdjust="spacingAndGlyphs">TR</text><text x="359.8" y="594.5999999999999" font-size="5.6" text-anchor="middle" font-family="Liberation Sans" font-weight="bold" stroke="#000" stroke-width="0.25" textLength="9" lengthAdjust="spacingAndGlyphs">2126</text><path d="M364,595 L369,602" fill="none" stroke="#000" stroke-width="1" stroke-linejoin="miter"/><path d="M361,605.5 L361,612" fill="none" stroke="#000" stroke-width="1.2" stroke-linejoin="miter"/><path d="M357,612 L365,622 L357,622 L365,612 Z" fill="#fff" stroke="#000" stroke-width="1"/><path d="M357,623.5 h8" stroke="#000" stroke-width="1"/><path d="M376.7,605.5 L376.7,612" fill="none" stroke="#000" stroke-width="1.2" stroke-linejoin="miter"/><path d="M372.7,612 L380.7,622 L372.7,622 L380.7,612 Z" fill="#fff" stroke="#000" stroke-width="1"/><path d="M372.7,623.5 h8" stroke="#000" stroke-width="1"/><text x="343" y="617" font-size="6.8" text-anchor="start" font-family="Liberation Sans" font-weight="bold" stroke="#000" stroke-width="0.35" textLength="10" lengthAdjust="spacingAndGlyphs">DN25</text><text x="378" y="617" font-size="6.8" text-anchor="start" font-family="Liberation Sans" font-weight="bold" stroke="#000" stroke-width="0.35" textLength="10" lengthAdjust="spacingAndGlyphs">DN25</text><text x="362" y="630" font-size="6.8" text-anchor="start" font-family="Liberation Sans" font-weight="bold" stroke="#000" stroke-width="0.35" textLength="10" lengthAdjust="spacingAndGlyphs">DN25</text><path d="M590.6,596 L590.6,634" fill="none" stroke="#000" stroke-width="1" stroke-linejoin="miter"/><path d="M588,600 L590.6,594 L593,600Z M588,630 L590.6,636 L593,630Z" fill="#000"/><rect x="602" y="615" width="5" height="10" fill="#fff"/><path d="M581,613.5 L608,613.5" fill="none" stroke="#000" stroke-width="1" stroke-linejoin="miter"/><path d="M601,614 L606,627" fill="none" stroke="#000" stroke-width="1.2" stroke-linejoin="miter"/><text x="588" y="628" font-size="6.2" text-anchor="start" font-family="Liberation Sans" font-weight="bold" stroke="#000" stroke-width="0.35" textLength="8" lengthAdjust="spacingAndGlyphs" transform="rotate(-90 588 628)">40K</text><text x="588" y="610" font-size="6.2" text-anchor="start" font-family="Liberation Sans" font-weight="bold" stroke="#000" stroke-width="0.35" textLength="8" lengthAdjust="spacingAndGlyphs" transform="rotate(-90 588 610)">A1A</text><text x="600" y="693" font-size="7.5" text-anchor="start" font-family="Liberation Sans" font-weight="bold" stroke="#000" stroke-width="0.35" textLength="58" lengthAdjust="spacingAndGlyphs" transform="rotate(-90 600 693)">220-LS-21008A-100-A0K-M</text><rect x="674.0" y="643.9" width="18.8" height="18.8" fill="#fff" stroke="#000" stroke-width="1.1"/><circle cx="683.4" cy="653.3" r="9.4" fill="#fff" stroke="#000" stroke-width="1.1"/><text x="683.4" y="650.6999999999999" font-size="5.6" text-anchor="middle" font-family="Liberation Sans" font-weight="bold" stroke="#000" stroke-width="0.25" textLength="7.199999999999999" lengthAdjust="spacingAndGlyphs">220</text><text x="683.4" y="655.9" font-size="5.6" text-anchor="middle" font-family="Liberation Sans" font-weight="bold" stroke="#000" stroke-width="0.25" textLength="9" lengthAdjust="spacingAndGlyphs">TICA</text><text x="683.4" y="661.0999999999999" font-size="5.6" text-anchor="middle" font-family="Liberation Sans" font-weight="bold" stroke="#000" stroke-width="0.25" textLength="9" lengthAdjust="spacingAndGlyphs">2126</text><text x="693" y="663" font-size="6.8" text-anchor="start" font-family="Liberation Sans" font-weight="normal" stroke="#000" stroke-width="0.35">L</text><path d="M683.4,663 L683.4,675" fill="none" stroke="#111" stroke-width="1.3" stroke-dasharray="4 2.6" stroke-linejoin="miter"/><circle cx="683.4" cy="684.3" r="9.4" fill="#fff" stroke="#000" stroke-width="1.1"/><text x="683.4" y="681.6999999999999" font-size="5.6" text-anchor="middle" font-family="Liberation Sans" font-weight="bold" stroke="#000" stroke-width="0.25" textLength="7.199999999999999" lengthAdjust="spacingAndGlyphs">220</text><text x="683.4" y="686.9" font-size="5.6" text-anchor="middle" font-family="Liberation Sans" font-weight="bold" stroke="#000" stroke-width="0.25" textLength="4.8" lengthAdjust="spacingAndGlyphs">TE</text><text x="683.4" y="692.0999999999999" font-size="5.6" text-anchor="middle" font-family="Liberation Sans" font-weight="bold" stroke="#000" stroke-width="0.25" textLength="9" lengthAdjust="spacingAndGlyphs">2126</text><path d="M683.4,693.5 L683.4,708.7" fill="none" stroke="#000" stroke-width="1" stroke-linejoin="miter"/><path d="M680,701 L687,701" fill="none" stroke="#000" stroke-width="1" stroke-linejoin="miter"/><text x="688" y="704" font-size="6.2" text-anchor="start" font-family="Liberation Sans" font-weight="bold" stroke="#000" stroke-width="0.35" textLength="9" lengthAdjust="spacingAndGlyphs">DN40</text><path d="M260.2,699.3 H320.8 L329.2,708.8 L320.8,718.3 H260.2 Z" fill="#fff" stroke="#000" stroke-width="1"/><path d="M260.2,708.8 H329.2" stroke="#000" stroke-width="1"/><text x="262" y="706" font-size="6.2" text-anchor="start" font-family="Liberation Sans" font-weight="bold" stroke="#000" stroke-width="0.35" textLength="42" lengthAdjust="spacingAndGlyphs">CO2气余自220-E-2101</text><text x="262" y="715" font-size="6.2" text-anchor="start" font-family="Liberation Sans" font-weight="bold" stroke="#000" stroke-width="0.35" textLength="19" lengthAdjust="spacingAndGlyphs">PID-2201</text><path d="M329.2,708.7 L736,708.7" fill="none" stroke="#000" stroke-width="2" stroke-linejoin="miter"/><text x="345" y="705" font-size="7.5" text-anchor="start" font-family="Liberation Sans" font-weight="bold" stroke="#000" stroke-width="0.35" textLength="57" lengthAdjust="spacingAndGlyphs">220-LNC-21017-600-A0K-N</text><path d="M259.8,890.3 H279 L282.6,895.15 L279,900 H259.8 Z" fill="#fff" stroke="#000" stroke-width="1"/><text x="262" y="898" font-size="6.8" text-anchor="start" font-family="Liberation Sans" font-weight="bold" stroke="#000" stroke-width="0.35" textLength="6" lengthAdjust="spacingAndGlyphs">LN</text><path d="M282.6,895 L716,895 L716,734.3 L888.2,734.3" fill="none" stroke="#000" stroke-width="2" stroke-linejoin="miter"/><text x="343" y="891" font-size="7.5" text-anchor="start" font-family="Liberation Sans" font-weight="bold" stroke="#000" stroke-width="0.35" textLength="53" lengthAdjust="spacingAndGlyphs">220-LN-21005-50-A1A-N</text><path d="M434,890 L434,895 L445,895 Z" fill="#fff" stroke="#000" stroke-width="1"/><path d="M734.7,730.6999999999999 L745.7,737.9 L745.7,730.6999999999999 L734.7,737.9 Z" fill="#fff" stroke="#000" stroke-width="1"/><circle cx="740.2" cy="734.3" r="1.3" fill="#000"/><path d="M785.7,730.6999999999999 L796.7,737.9 L796.7,730.6999999999999 L785.7,737.9 Z" fill="#fff" stroke="#000" stroke-width="1"/><circle cx="791.2" cy="734.3" r="1.3" fill="#000"/><path d="M757.7,734.3 L757.7,743" fill="none" stroke="#000" stroke-width="1.3" stroke-linejoin="miter"/><path d="M753.7,744 L761.7,754 L753.7,754 L761.7,744 Z" fill="#fff" stroke="#000" stroke-width="1"/><path d="M753.7,755.5 h8" stroke="#000" stroke-width="1"/><text x="742" y="751" font-size="6.8" text-anchor="start" font-family="Liberation Sans" font-weight="bold" stroke="#000" stroke-width="0.35" textLength="10" lengthAdjust="spacingAndGlyphs">DN20</text><path d="M761,737 L778,728" fill="none" stroke="#000" stroke-width="1" stroke-linejoin="miter"/><path d="M778,725 L778,731" fill="none" stroke="#000" stroke-width="1" stroke-linejoin="miter"/><path d="M748,729 L790,729" fill="none" stroke="#000" stroke-width="1" stroke-linejoin="miter"/><text x="755" y="727" font-size="6.2" text-anchor="start" font-family="Liberation Sans" font-weight="bold" stroke="#000" stroke-width="0.35" textLength="8" lengthAdjust="spacingAndGlyphs">A1A</text><text x="770" y="727" font-size="6.2" text-anchor="start" font-family="Liberation Sans" font-weight="bold" stroke="#000" stroke-width="0.35" textLength="10" lengthAdjust="spacingAndGlyphs">A1SK</text><path d="M773,722 L773,734" fill="none" stroke="#000" stroke-width="1" stroke-linejoin="miter"/><path d="M814.5,734.3 L814.5,756.5" fill="none" stroke="#000" stroke-width="1" stroke-linejoin="miter"/><path d="M810.5,740 L818.5,750 L810.5,750 L818.5,740 Z" fill="#fff" stroke="#000" stroke-width="1"/><path d="M810.5,751.5 h8" stroke="#000" stroke-width="1"/><circle cx="814.5" cy="766" r="9.4" fill="#fff" stroke="#000" stroke-width="1.1"/><text x="814.5" y="763.4" font-size="5.6" text-anchor="middle" font-family="Liberation Sans" font-weight="bold" stroke="#000" stroke-width="0.25" textLength="7.199999999999999" lengthAdjust="spacingAndGlyphs">220</text><text x="814.5" y="768.6" font-size="5.6" text-anchor="middle" font-family="Liberation Sans" font-weight="bold" stroke="#000" stroke-width="0.25" textLength="4.8" lengthAdjust="spacingAndGlyphs">PG</text><text x="814.5" y="773.8" font-size="5.6" text-anchor="middle" font-family="Liberation Sans" font-weight="bold" stroke="#000" stroke-width="0.25" textLength="9" lengthAdjust="spacingAndGlyphs">2159</text><text x="816" y="732" font-size="7.5" text-anchor="start" font-family="Liberation Sans" font-weight="bold" stroke="#000" stroke-width="0.35" textLength="57" lengthAdjust="spacingAndGlyphs">220-LN-21005A-50-A1SK-N</text><path d="M862,731 L880,734.3 L862,737 Z" fill="#000"/><path d="M881,729 L881,740" fill="none" stroke="#000" stroke-width="1" stroke-linejoin="miter"/><text x="890" y="737" font-size="6.8" text-anchor="start" font-family="Liberation Sans" font-weight="bold" stroke="#000" stroke-width="0.35" textLength="15" lengthAdjust="spacingAndGlyphs">N2DN50</text><path d="M888.2,720 L888.2,818.3" fill="none" stroke="#000" stroke-width="1.3" stroke-linejoin="miter"/><path d="M943.2,720 L943.2,818.3" fill="none" stroke="#000" stroke-width="1.3" stroke-linejoin="miter"/><path d="M888.2,818.3" fill="none" stroke="#000" stroke-width="1" stroke-linejoin="miter"/><path d="M888.2,818.3 Q888.2,833 915.7,833 Q943.2,833 943.2,818.3" fill="none" stroke="#000" stroke-width="1.3"/><rect x="912" y="823" width="9" height="9" fill="#fff" stroke="#000" stroke-width="1"/><path d="M912,823 L921,832 M921,823 L912,832" stroke="#000" stroke-width="1"/><path d="M917,833 L917,887.1 L1448,887.1" fill="none" stroke="#000" stroke-width="2" stroke-linejoin="miter"/><path d="M917,835 L908.1,835 L908.1,845" fill="none" stroke="#000" stroke-width="1" stroke-linejoin="miter"/><path d="M904.1,846 L912.1,856 L904.1,856 L912.1,846 Z" fill="#fff" stroke="#000" stroke-width="1"/><path d="M904.1,857.5 h8" stroke="#000" stroke-width="1"/><text x="885" y="846" font-size="6.2" text-anchor="start" font-family="Liberation Sans" font-weight="bold" stroke="#000" stroke-width="0.35" textLength="17" lengthAdjust="spacingAndGlyphs">N8 DN80</text><path d="M912,838 L920,838" fill="none" stroke="#000" stroke-width="1" stroke-linejoin="miter"/><text x="922" y="840" font-size="6.2" text-anchor="start" font-family="Liberation Sans" font-weight="bold" stroke="#000" stroke-width="0.35" textLength="16" lengthAdjust="spacingAndGlyphs">N6 DN50</text><path d="M914,861 L920,861 L919,852 L915,852 Z" fill="#fff" stroke="#000" stroke-width="1"/><text x="923" y="853" font-size="6.2" text-anchor="start" font-family="Liberation Sans" font-weight="bold" stroke="#000" stroke-width="0.35" textLength="18" lengthAdjust="spacingAndGlyphs">DN80X50</text><path d="M914,866 L920,866 L917,876 Z" fill="#000"/><circle cx="853.6" cy="777.4" r="9.4" fill="#fff" stroke="#000" stroke-width="1.1"/><text x="853.6" y="774.8" font-size="5.6" text-anchor="middle" font-family="Liberation Sans" font-weight="bold" stroke="#000" stroke-width="0.25" textLength="7.199999999999999" lengthAdjust="spacingAndGlyphs">220</text><text x="853.6" y="780.0" font-size="5.6" text-anchor="middle" font-family="Liberation Sans" font-weight="bold" stroke="#000" stroke-width="0.25" textLength="4.8" lengthAdjust="spacingAndGlyphs">LG</text><text x="853.6" y="785.1999999999999" font-size="5.6" text-anchor="middle" font-family="Liberation Sans" font-weight="bold" stroke="#000" stroke-width="0.25" textLength="9" lengthAdjust="spacingAndGlyphs">2160</text><path d="M853.6,768 L853.6,759.6 L888.2,759.6" fill="none" stroke="#000" stroke-width="1" stroke-linejoin="miter"/><path d="M865.5,756.0 L876.5,763.2 L876.5,756.0 L865.5,763.2 Z" fill="#fff" stroke="#000" stroke-width="1"/><circle cx="871" cy="759.6" r="1.3" fill="#000"/><text x="866" y="754" font-size="6.2" text-anchor="start" font-family="Liberation Sans" font-weight="bold" stroke="#000" stroke-width="0.35" textLength="9" lengthAdjust="spacingAndGlyphs">DN40</text><text x="890" y="762" font-size="6.2" text-anchor="start" font-family="Liberation Sans" font-weight="bold" stroke="#000" stroke-width="0.35" textLength="10" lengthAdjust="spacingAndGlyphs">LG1a</text><path d="M853.6,787 L853.6,796.2 L888.2,796.2" fill="none" stroke="#000" stroke-width="1" stroke-linejoin="miter"/><path d="M865.5,792.6 L876.5,799.8000000000001 L876.5,792.6 L865.5,799.8000000000001 Z" fill="#fff" stroke="#000" stroke-width="1"/><circle cx="871" cy="796.2" r="1.3" fill="#000"/><text x="866" y="805" font-size="6.2" text-anchor="start" font-family="Liberation Sans" font-weight="bold" stroke="#000" stroke-width="0.35" textLength="9" lengthAdjust="spacingAndGlyphs">DN40</text><text x="890" y="799" font-size="6.2" text-anchor="start" font-family="Liberation Sans" font-weight="bold" stroke="#000" stroke-width="0.35" textLength="10" lengthAdjust="spacingAndGlyphs">LG1b</text><path d="M943.2,755.5 L978.2,755.5 L978.2,764" fill="none" stroke="#000" stroke-width="1" stroke-linejoin="miter"/><path d="M949.5,751.9 L960.5,759.1 L960.5,751.9 L949.5,759.1 Z" fill="#fff" stroke="#000" stroke-width="1"/><circle cx="955" cy="755.5" r="1.3" fill="#000"/><text x="950" y="750" font-size="6.2" text-anchor="start" font-family="Liberation Sans" font-weight="bold" stroke="#000" stroke-width="0.35" textLength="10" lengthAdjust="spacingAndGlyphs">DN50</text><text x="931" y="758" font-size="6.2" text-anchor="start" font-family="Liberation Sans" font-weight="bold" stroke="#000" stroke-width="0.35" textLength="10" lengthAdjust="spacingAndGlyphs">LT2a</text><path d="M943.2,792.5 L978.2,792.5 L978.2,783" fill="none" stroke="#000" stroke-width="1" stroke-linejoin="miter"/><path d="M949.5,788.9 L960.5,796.1 L960.5,788.9 L949.5,796.1 Z" fill="#fff" stroke="#000" stroke-width="1"/><circle cx="955" cy="792.5" r="1.3" fill="#000"/><text x="950" y="801" font-size="6.2" text-anchor="start" font-family="Liberation Sans" font-weight="bold" stroke="#000" stroke-width="0.35" textLength="10" lengthAdjust="spacingAndGlyphs">DN50</text><text x="931" y="795" font-size="6.2" text-anchor="start" font-family="Liberation Sans" font-weight="bold" stroke="#000" stroke-width="0.35" textLength="10" lengthAdjust="spacingAndGlyphs">LT2b</text><path d="M943.2,775 L951,775" fill="none" stroke="#000" stroke-width="1" stroke-linejoin="miter"/><path d="M951,771 L951,779" fill="none" stroke="#000" stroke-width="1" stroke-linejoin="miter"/><text x="954" y="777" font-size="6.2" text-anchor="start" font-family="Liberation Sans" font-weight="bold" stroke="#000" stroke-width="0.35" textLength="5" lengthAdjust="spacingAndGlyphs">N2</text><text x="953" y="784" font-size="6.2" text-anchor="start" font-family="Liberation Sans" font-weight="bold" stroke="#000" stroke-width="0.35" textLength="12" lengthAdjust="spacingAndGlyphs">DN600</text><circle cx="978.2" cy="773.7" r="9.4" fill="#fff" stroke="#000" stroke-width="1.1"/><text x="978.2" y="771.1" font-size="5.6" text-anchor="middle" font-family="Liberation Sans" font-weight="bold" stroke="#000" stroke-width="0.25" textLength="7.199999999999999" lengthAdjust="spacingAndGlyphs">220</text><text x="978.2" y="776.3000000000001" font-size="5.6" text-anchor="middle" font-family="Liberation Sans" font-weight="bold" stroke="#000" stroke-width="0.25" textLength="4.8" lengthAdjust="spacingAndGlyphs">LT</text><text x="978.2" y="781.5" font-size="5.6" text-anchor="middle" font-family="Liberation Sans" font-weight="bold" stroke="#000" stroke-width="0.25" textLength="9" lengthAdjust="spacingAndGlyphs">2161</text><path d="M988,773.7 L1003,773.7" fill="none" stroke="#111" stroke-width="1.3" stroke-dasharray="4 2.6" stroke-linejoin="miter"/><rect x="1002.9" y="764.3000000000001" width="18.8" height="18.8" fill="#fff" stroke="#000" stroke-width="1.1"/><circle cx="1012.3" cy="773.7" r="9.4" fill="#fff" stroke="#000" stroke-width="1.1"/><text x="1012.3" y="771.1" font-size="5.6" text-anchor="middle" font-family="Liberation Sans" font-weight="bold" stroke="#000" stroke-width="0.25" textLength="7.199999999999999" lengthAdjust="spacingAndGlyphs">220</text><text x="1012.3" y="776.3000000000001" font-size="5.6" text-anchor="middle" font-family="Liberation Sans" font-weight="bold" stroke="#000" stroke-width="0.25" textLength="9" lengthAdjust="spacingAndGlyphs">LICA</text><text x="1012.3" y="781.5" font-size="5.6" text-anchor="middle" font-family="Liberation Sans" font-weight="bold" stroke="#000" stroke-width="0.25" textLength="9" lengthAdjust="spacingAndGlyphs">2161</text><text x="1022" y="767" font-size="6.8" text-anchor="start" font-family="Liberation Sans" font-weight="normal" stroke="#000" stroke-width="0.35">H</text><text x="1022" y="783" font-size="6.8" text-anchor="start" font-family="Liberation Sans" font-weight="normal" stroke="#000" stroke-width="0.35">L</text><path d="M1022,773.7 L1176.8,773.7 L1176.8,866" fill="none" stroke="#111" stroke-width="1.3" stroke-dasharray="4 2.6" stroke-linejoin="miter"/><path d="M1134.9,887.1 L1134.9,909 L1218.4,909 L1218.4,887.1" fill="none" stroke="#000" stroke-width="2" stroke-linejoin="miter"/><path d="M1140.7,883.5 L1151.7,890.7 L1151.7,883.5 L1140.7,890.7 Z" fill="#fff" stroke="#000" stroke-width="1"/><circle cx="1146.2" cy="887.1" r="1.3" fill="#000"/><path d="M1203.0,883.5 L1214.0,890.7 L1214.0,883.5 L1203.0,890.7 Z" fill="#fff" stroke="#000" stroke-width="1"/><circle cx="1208.5" cy="887.1" r="1.3" fill="#000"/><path d="M1172.0,905.4 L1183.0,912.6 L1183.0,905.4 L1172.0,912.6 Z" fill="#fff" stroke="#000" stroke-width="1"/><circle cx="1177.5" cy="909" r="1.3" fill="#000"/><path d="M1171.3,882.6 L1182.3,891.6 L1182.3,882.6 L1171.3,891.6 Z" fill="#fff" stroke="#000" stroke-width="1"/><path d="M1176.8,887.1 V875.1" stroke="#000" stroke-width="1.2"/><path d="M1171.8,875.1 A5,4.5 0 0 1 1181.8,875.1 Z" fill="#fff" stroke="#000" stroke-width="1"/><rect x="1175.3" y="882.1" width="3" height="4" fill="#000"/><text x="1176.8" y="898.1" font-size="6" text-anchor="middle" font-family="Liberation Sans" fill="#000" stroke="#000" stroke-width="0.3">FC</text><circle cx="1150.2" cy="866.3" r="9.4" fill="#fff" stroke="#000" stroke-width="1.1"/><text x="1150.2" y="863.6999999999999" font-size="5.6" text-anchor="middle" font-family="Liberation Sans" font-weight="bold" stroke="#000" stroke-width="0.25" textLength="7.199999999999999" lengthAdjust="spacingAndGlyphs">220</text><text x="1150.2" y="868.9" font-size="5.6" text-anchor="middle" font-family="Liberation Sans" font-weight="bold" stroke="#000" stroke-width="0.25" textLength="4.8" lengthAdjust="spacingAndGlyphs">LH</text><text x="1150.2" y="874.0999999999999" font-size="5.6" text-anchor="middle" font-family="Liberation Sans" font-weight="bold" stroke="#000" stroke-width="0.25" textLength="9" lengthAdjust="spacingAndGlyphs">2161</text><path d="M1157,873 L1168,882" fill="none" stroke="#000" stroke-width="1" stroke-linejoin="miter"/><path d="M1161.3,887.1 L1161.3,905" fill="none" stroke="#000" stroke-width="2" stroke-linejoin="miter"/><path d="M1161.3,912 L1161.3,920" fill="none" stroke="#000" stroke-width="1.3" stroke-linejoin="miter"/><path d="M1157.3,920 L1165.3,930 L1157.3,930 L1165.3,920 Z" fill="#fff" stroke="#000" stroke-width="1"/><path d="M1157.3,931.5 h8" stroke="#000" stroke-width="1"/><text x="1147" y="928" font-size="6.2" text-anchor="start" font-family="Liberation Sans" font-weight="bold" stroke="#000" stroke-width="0.35" textLength="10" lengthAdjust="spacingAndGlyphs">DN25</text><text x="1172" y="905" font-size="6.2" text-anchor="start" font-family="Liberation Sans" font-weight="bold" stroke="#000" stroke-width="0.35" textLength="9" lengthAdjust="spacingAndGlyphs">DN80</text><path d="M1180,879 L1197,862.5 L1209,862.5" fill="none" stroke="#f00" stroke-width="1"/><rect x="1209" y="853.5" width="68" height="18.0" rx="9.0" fill="#fff" stroke="#f33" stroke-width="1"/><text x="1244.0" y="867.9" font-size="15.5" letter-spacing="0.6" text-anchor="middle" fill="#f00" font-family="Liberation Serif, serif">事故关4</text><path d="M1448.1,877.5 H1508.8 L1517.7,886.9 L1508.8,896.3 H1448.1 Z" fill="#fff" stroke="#000" stroke-width="1"/><path d="M1448.1,886.9 H1517.7" stroke="#000" stroke-width="1"/><text x="1379" y="882" font-size="7.5" text-anchor="start" font-family="Liberation Sans" font-weight="bold" stroke="#000" stroke-width="0.35" textLength="54" lengthAdjust="spacingAndGlyphs">220-BWE-21002-80-ATK-T</text><text x="1450" y="885" font-size="6.2" text-anchor="start" font-family="Liberation Sans" font-weight="bold" stroke="#000" stroke-width="0.35" textLength="40" lengthAdjust="spacingAndGlyphs">洗涤水自220-C-2106</text><text x="1450" y="894" font-size="6.2" text-anchor="start" font-family="Liberation Sans" font-weight="bold" stroke="#000" stroke-width="0.35" textLength="19" lengthAdjust="spacingAndGlyphs">PID-2221</text><path d="M1185,518.1 L1490.2,518.1" fill="none" stroke="#000" stroke-width="2" stroke-linejoin="miter"/><path d="M1185,516.3 L1490,516.3" fill="none" stroke="#111" stroke-width="1.3" stroke-dasharray="4 2.6" stroke-linejoin="miter"/><path d="M1193.1,518.1 L1193.1,553.5 L1292.8,553.5 L1292.8,518.1" fill="none" stroke="#000" stroke-width="2" stroke-linejoin="miter"/><path d="M1190.2,520 L1190.2,551.1 L1290.7,551.1 L1290.7,520" fill="none" stroke="#111" stroke-width="1.3" stroke-dasharray="4 2.6" stroke-linejoin="miter"/><path d="M1205.8,514.5 L1216.8,521.7 L1216.8,514.5 L1205.8,521.7 Z" fill="#fff" stroke="#000" stroke-width="1"/><circle cx="1211.3" cy="518.1" r="1.3" fill="#000"/><path d="M1267.0,514.5 L1278.0,521.7 L1278.0,514.5 L1267.0,521.7 Z" fill="#fff" stroke="#000" stroke-width="1"/><circle cx="1272.5" cy="518.1" r="1.3" fill="#000"/><path d="M1236.4,549.9 L1247.4,557.1 L1247.4,549.9 L1236.4,557.1 Z" fill="#fff" stroke="#000" stroke-width="1"/><circle cx="1241.9" cy="553.5" r="1.3" fill="#000"/><path d="M1237.4,513.6 L1248.4,522.6 L1248.4,513.6 L1237.4,522.6 Z" fill="#fff" stroke="#000" stroke-width="1"/><path d="M1242.9,518.1 V506.1" stroke="#000" stroke-width="1.2"/><path d="M1237.9,506.1 A5,4.5 0 0 1 1247.9,506.1 Z" fill="#fff" stroke="#000" stroke-width="1"/><rect x="1241.4" y="513.1" width="3" height="4" fill="#000"/><text x="1242.9" y="529.1" font-size="6" text-anchor="middle" font-family="Liberation Sans" fill="#000" stroke="#000" stroke-width="0.3">FC</text><path d="M1242.9,500 L1242.9,452.3 L1309.6,452.3" fill="none" stroke="#111" stroke-width="1.3" stroke-dasharray="4 2.6" stroke-linejoin="miter"/><rect x="1309.3" y="442.90000000000003" width="18.8" height="18.8" fill="#fff" stroke="#000" stroke-width="1.1"/><circle cx="1318.7" cy="452.3" r="9.4" fill="#fff" stroke="#000" stroke-width="1.1"/><text x="1318.7" y="449.7" font-size="5.6" text-anchor="middle" font-family="Liberation Sans" font-weight="bold" stroke="#000" stroke-width="0.25" textLength="7.199999999999999" lengthAdjust="spacingAndGlyphs">220</text><text x="1318.7" y="454.9" font-size="5.6" text-anchor="middle" font-family="Liberation Sans" font-weight="bold" stroke="#000" stroke-width="0.25" textLength="9" lengthAdjust="spacingAndGlyphs">FICA</text><text x="1318.7" y="460.09999999999997" font-size="5.6" text-anchor="middle" font-family="Liberation Sans" font-weight="bold" stroke="#000" stroke-width="0.25" textLength="9" lengthAdjust="spacingAndGlyphs">2142</text><text x="1330" y="461" font-size="6.8" text-anchor="start" font-family="Liberation Sans" font-weight="normal" stroke="#000" stroke-width="0.35">L</text><path d="M1318.3,461.7 L1318.3,475.3" fill="none" stroke="#111" stroke-width="1.3" stroke-dasharray="4 2.6" stroke-linejoin="miter"/><path d="M1318.3,494 L1318.3,514" fill="none" stroke="#111" stroke-width="1.3" stroke-dasharray="4 2.6" stroke-linejoin="miter"/><circle cx="1318.3" cy="484.6" r="9.4" fill="#fff" stroke="#000" stroke-width="1.1"/><text x="1318.3" y="482.0" font-size="5.6" text-anchor="middle" font-family="Liberation Sans" font-weight="bold" stroke="#000" stroke-width="0.25" textLength="7.199999999999999" lengthAdjust="spacingAndGlyphs">220</text><text x="1318.3" y="487.2" font-size="5.6" text-anchor="middle" font-family="Liberation Sans" font-weight="bold" stroke="#000" stroke-width="0.25" textLength="4.8" lengthAdjust="spacingAndGlyphs">PT</text><text x="1318.3" y="492.4" font-size="5.6" text-anchor="middle" font-family="Liberation Sans" font-weight="bold" stroke="#000" stroke-width="0.25" textLength="9" lengthAdjust="spacingAndGlyphs">2142</text><circle cx="1336.5" cy="497.7" r="9.4" fill="#fff" stroke="#000" stroke-width="1.1"/><text x="1336.5" y="495.09999999999997" font-size="5.6" text-anchor="middle" font-family="Liberation Sans" font-weight="bold" stroke="#000" stroke-width="0.25" textLength="7.199999999999999" lengthAdjust="spacingAndGlyphs">220</text><text x="1336.5" y="500.29999999999995" font-size="5.6" text-anchor="middle" font-family="Liberation Sans" font-weight="bold" stroke="#000" stroke-width="0.25" textLength="4.8" lengthAdjust="spacingAndGlyphs">PE</text><text x="1336.5" y="505.49999999999994" font-size="5.6" text-anchor="middle" font-family="Liberation Sans" font-weight="bold" stroke="#000" stroke-width="0.25" textLength="9" lengthAdjust="spacingAndGlyphs">2142</text><circle cx="1229.5" cy="492.3" r="9.4" fill="#fff" stroke="#000" stroke-width="1.1"/><text x="1229.5" y="489.7" font-size="5.6" text-anchor="middle" font-family="Liberation Sans" font-weight="bold" stroke="#000" stroke-width="0.25" textLength="7.199999999999999" lengthAdjust="spacingAndGlyphs">220</text><text x="1229.5" y="494.9" font-size="5.6" text-anchor="middle" font-family="Liberation Sans" font-weight="bold" stroke="#000" stroke-width="0.25" textLength="4.8" lengthAdjust="spacingAndGlyphs">PY</text><text x="1229.5" y="500.09999999999997" font-size="5.6" text-anchor="middle" font-family="Liberation Sans" font-weight="bold" stroke="#000" stroke-width="0.25" textLength="9" lengthAdjust="spacingAndGlyphs">2142</text><path d="M1234,501 L1240,514" fill="none" stroke="#000" stroke-width="1" stroke-linejoin="miter"/><path d="M1329,505 L1320,514" fill="none" stroke="#000" stroke-width="1" stroke-linejoin="miter"/><path d="M1261.8,518.1 L1261.8,528" fill="none" stroke="#000" stroke-width="1.3" stroke-linejoin="miter"/><path d="M1257.8,529 L1265.8,539 L1257.8,539 L1265.8,529 Z" fill="#fff" stroke="#000" stroke-width="1"/><path d="M1257.8,540.5 h8" stroke="#000" stroke-width="1"/><text x="1266" y="538" font-size="6.2" text-anchor="start" font-family="Liberation Sans" font-weight="bold" stroke="#000" stroke-width="0.35" textLength="10" lengthAdjust="spacingAndGlyphs">DN25</text><text x="1236" y="546" font-size="6.2" text-anchor="start" font-family="Liberation Sans" font-weight="bold" stroke="#000" stroke-width="0.35" textLength="10" lengthAdjust="spacingAndGlyphs">DN50</text><rect x="1313" y="514" width="11" height="8" fill="#fff" stroke="#000" stroke-width="1"/><path d="M1306,515 L1313,516 L1313,521 L1306,522 L1306,515" fill="none" stroke="#000" stroke-width="1" stroke-linejoin="miter"/><path d="M1331,515 L1324,516 L1324,521 L1331,522 L1331,515" fill="none" stroke="#000" stroke-width="1" stroke-linejoin="miter"/><text x="1292" y="512" font-size="6.2" text-anchor="start" font-family="Liberation Sans" font-weight="bold" stroke="#000" stroke-width="0.35" textLength="18" lengthAdjust="spacingAndGlyphs">DN50X25</text><text x="1328" y="512" font-size="6.2" text-anchor="start" font-family="Liberation Sans" font-weight="bold" stroke="#000" stroke-width="0.35" textLength="18" lengthAdjust="spacingAndGlyphs">DN50X25</text><text x="1376" y="515" font-size="7.5" text-anchor="start" font-family="Liberation Sans" font-weight="bold" stroke="#000" stroke-width="0.35" textLength="56" lengthAdjust="spacingAndGlyphs">220-DEB-21005-50-ADK-T</text><path d="M1490.2,518.7 L1494.2,513.8 H1512.8 V523.6 H1494.2 Z" fill="#fff" stroke="#000" stroke-width="1"/><text x="1497" y="521" font-size="6.8" text-anchor="start" font-family="Liberation Sans" font-weight="bold" stroke="#000" stroke-width="0.35" textLength="11" lengthAdjust="spacingAndGlyphs">DEB</text><path d="M1186,525 L1188,530" fill="none" stroke="#000" stroke-width="1" stroke-linejoin="miter"/></svg>
<div class="abs" style="left:735px;top:282px;width:451px;height:438px;border-radius:8px;background:#f0f0f0;border:1px solid #adadad;box-shadow:0 10px 48px rgba(0,0,0,.40);overflow:hidden">
  <div class="abs" style="left:0;top:0;width:100%;height:31px;background:#eef2f7"></div>
</div>
<div class="abs" style="left:743px;top:290px;width:15px;height:15px;border-radius:3px;background:linear-gradient(#e07a18,#b85a10)"></div>
<div class="abs" style="left:743px;top:293px;width:15px;text-align:center;font-size:6px;font-weight:bold;color:#f0dcc0">PDF</div>
<div class="abs" style="left:765px;top:289px;font-size:12px;color:#111;line-height:16px;white-space:nowrap">标注分类管理</div>
<svg class="abs" style="left:1164px;top:291px" width="12" height="12" viewBox="0 0 12 12"><path d="M1 1l10 10M11 1L1 11" stroke="#222" stroke-width="1.2"/></svg>

<div class="abs" style="left:746px;top:324px;width:76px;height:23px;background:#fff;border:1px solid #1677d2;border-radius:4px"></div>
<svg class="abs" style="left:751px;top:329px" width="13" height="13" viewBox="0 0 13 13"><circle cx="6.5" cy="6.5" r="5.6" fill="none" stroke="#c9a05a" stroke-width="1"/><path d="M6.5 3.5v6M3.5 6.5h6" stroke="#c9a05a" stroke-width="1"/></svg>
<div class="abs" style="left:770px;top:327px;font-size:12px;color:#111;line-height:16px;white-space:nowrap">新建分类</div>

<div class="abs" style="left:831px;top:324px;width:95px;height:23px;background:#fdfdfd;border:1px solid #cfcfcf;border-radius:4px"></div>
<svg class="abs" style="left:841px;top:327px" width="14" height="15" viewBox="0 0 14 15"><path d="M9 13H1.5V1.5h10V8 M3.5 4h6M3.5 6.5h6M3.5 9h3 M10.5 9.5v5M8 12h5" fill="none" stroke="#c9a05a" stroke-width="1"/></svg>
<div class="abs" style="left:860px;top:327px;font-size:12px;color:#111;line-height:16px;white-space:nowrap">快速创建</div>
<svg class="abs" style="left:911px;top:333px" width="10" height="6" viewBox="0 0 10 6"><path d="M0 0h10L5 5.5z" fill="#111"/></svg>

<div class="abs" style="left:1009px;top:324px;width:76px;height:23px;background:#fdfdfd;border:1px solid #cfcfcf;border-radius:4px"></div>
<svg class="abs" style="left:1013px;top:330px" width="16" height="12" viewBox="0 0 16 12"><path d="M1.5 6C4 2 12 2 14.5 6 12 10 4 10 1.5 6z" fill="none" stroke="#555" stroke-width="0.9"/><circle cx="8" cy="6" r="2" fill="none" stroke="#555" stroke-width="0.9"/></svg>
<div class="abs" style="left:1033px;top:327px;font-size:12px;color:#111;line-height:16px;white-space:nowrap">全部显示</div>
<div class="abs" style="left:1097px;top:324px;width:77px;height:23px;background:#fdfdfd;border:1px solid #cfcfcf;border-radius:4px"></div>
<svg class="abs" style="left:1101px;top:330px" width="16" height="12" viewBox="0 0 16 12"><path d="M1.5 6C4 2 12 2 14.5 6 12 10 4 10 1.5 6z" fill="none" stroke="#555" stroke-width="0.9"/><circle cx="8" cy="6" r="2" fill="none" stroke="#555" stroke-width="0.9"/><path d="M3.5 11L12 1" stroke="#555" stroke-width="0.9"/></svg>
<div class="abs" style="left:1121px;top:327px;font-size:12px;color:#111;line-height:16px;white-space:nowrap">全部隐藏</div>

<div class="abs" style="left:746px;top:359px;width:428px;height:22px;background:#fff;border:1px solid #e6e6e6;border-radius:4px"></div>
<svg class="abs" style="left:753px;top:362px" width="15" height="15" viewBox="0 0 15 15"><circle cx="6.2" cy="6.2" r="4.8" fill="none" stroke="#444" stroke-width="1.1"/><path d="M9.8 9.8l3.6 3.6" stroke="#444" stroke-width="1.1"/></svg>
<div class="abs" style="left:776px;top:362px;font-size:12px;color:#8a8a8a;line-height:16px;white-space:nowrap">请输入要查找的分类名称</div>

<div class="abs" style="left:746px;top:387px;width:429px;height:299px;background:#fdfdfd;border:1px solid #dedede;border-radius:3px"></div>
<svg class="abs" style="left:794px;top:389px" width="9" height="5" viewBox="0 0 9 5"><path d="M1 1l3.5 3L8 1" fill="none" stroke="#888" stroke-width=".9"/></svg>
<div class="abs" style="left:768px;width:60px;top:393px;text-align:center;font-size:12px;font-weight:bold;color:#111;line-height:16px">名称</div><div class="abs" style="left:865px;width:60px;top:393px;text-align:center;font-size:12px;font-weight:bold;color:#111;line-height:16px">颜色</div><div class="abs" style="left:947px;width:60px;top:393px;text-align:center;font-size:12px;font-weight:bold;color:#111;line-height:16px">显示</div><div class="abs" style="left:1026px;width:60px;top:393px;text-align:center;font-size:12px;font-weight:bold;color:#111;line-height:16px">当前</div><div class="abs" style="left:1105px;width:60px;top:393px;text-align:center;font-size:12px;font-weight:bold;color:#111;line-height:16px">操作</div>
<div class="abs" style="left:747px;top:443px;width:425px;height:1px;background:#dcdcdc"></div><div class="abs" style="left:750px;top:420px;font-size:12px;color:#1a1a1a;line-height:16px;white-space:nowrap">2025年1季度</div><div class="abs" style="left:856px;top:420px;width:77px;height:17px;background:#f0b955;border:1px solid #4a4a4a;border-radius:3px"></div><svg class="abs" style="left:969px;top:422px" width="16" height="12" viewBox="0 0 16 12"><path d="M1.5 6C4 2 12 2 14.5 6 12 10 4 10 1.5 6z" fill="none" stroke="#666" stroke-width="0.9"/><circle cx="8" cy="6" r="2" fill="none" stroke="#666" stroke-width="0.9"/><path d="M3.5 11L12 1" stroke="#666" stroke-width="0.9"/></svg><svg class="abs" style="left:1127px;top:421px" width="15" height="15" viewBox="0 0 15 15"><rect x="1" y="1" width="13" height="13" fill="none" stroke="#666" stroke-width="1"/><path d="M3.5 3.5l8 8M11.5 3.5l-8 8" stroke="#555" stroke-width="1"/></svg><div class="abs" style="left:747px;top:473px;width:425px;height:1px;background:#dcdcdc"></div><div class="abs" style="left:750px;top:450px;font-size:12px;color:#1a1a1a;line-height:16px;white-space:nowrap">2025年2季度</div><div class="abs" style="left:856px;top:450px;width:77px;height:17px;background:#2ea36a;border:1px solid #4a4a4a;border-radius:3px"></div><svg class="abs" style="left:969px;top:452px" width="16" height="12" viewBox="0 0 16 12"><path d="M1.5 6C4 2 12 2 14.5 6 12 10 4 10 1.5 6z" fill="none" stroke="#666" stroke-width="0.9"/><circle cx="8" cy="6" r="2" fill="none" stroke="#666" stroke-width="0.9"/><path d="M3.5 11L12 1" stroke="#666" stroke-width="0.9"/></svg><svg class="abs" style="left:1127px;top:451px" width="15" height="15" viewBox="0 0 15 15"><rect x="1" y="1" width="13" height="13" fill="none" stroke="#666" stroke-width="1"/><path d="M3.5 3.5l8 8M11.5 3.5l-8 8" stroke="#555" stroke-width="1"/></svg><div class="abs" style="left:747px;top:473px;width:425px;height:30px;background:#e5f1fb"></div><div class="abs" style="left:747px;top:503px;width:425px;height:1px;background:#dcdcdc"></div><div class="abs" style="left:750px;top:480px;font-size:12px;color:#1a1a1a;line-height:16px;white-space:nowrap">2025年3季度</div><div class="abs" style="left:856px;top:480px;width:77px;height:17px;background:#6b4fbf;border:1px solid #4a4a4a;border-radius:3px"></div><svg class="abs" style="left:969px;top:482px" width="16" height="12" viewBox="0 0 16 12"><path d="M1.5 6C4 2 12 2 14.5 6 12 10 4 10 1.5 6z" fill="none" stroke="#666" stroke-width="0.9"/><circle cx="8" cy="6" r="2" fill="none" stroke="#666" stroke-width="0.9"/><path d="M3.5 11L12 1" stroke="#666" stroke-width="0.9"/></svg><svg class="abs" style="left:1127px;top:481px" width="15" height="15" viewBox="0 0 15 15"><rect x="1" y="1" width="13" height="13" fill="none" stroke="#666" stroke-width="1"/><path d="M3.5 3.5l8 8M11.5 3.5l-8 8" stroke="#555" stroke-width="1"/></svg><div class="abs" style="left:747px;top:533px;width:425px;height:1px;background:#dcdcdc"></div><div class="abs" style="left:750px;top:510px;font-size:12px;color:#1a1a1a;line-height:16px;white-space:nowrap">2025年4季度</div><div class="abs" style="left:856px;top:510px;width:77px;height:17px;background:#ff0000;border:1px solid #4a4a4a;border-radius:3px"></div><svg class="abs" style="left:969px;top:512px" width="16" height="12" viewBox="0 0 16 12"><path d="M1.5 6C4 2 12 2 14.5 6 12 10 4 10 1.5 6z" fill="none" stroke="#2b8ae6" stroke-width="0.9"/><circle cx="8" cy="6" r="2" fill="none" stroke="#2b8ae6" stroke-width="0.9"/></svg><svg class="abs" style="left:1048px;top:512px" width="14" height="11" viewBox="0 0 14 11"><path d="M1 5.5l4 4L13 1" fill="none" stroke="#2b8ae6" stroke-width="1.3"/></svg><svg class="abs" style="left:1127px;top:511px" width="15" height="15" viewBox="0 0 15 15"><rect x="1" y="1" width="13" height="13" fill="none" stroke="#666" stroke-width="1"/><path d="M3.5 3.5l8 8M11.5 3.5l-8 8" stroke="#555" stroke-width="1"/></svg><div class="abs" style="left:849px;top:388px;width:1px;height:145px;background:#dcdcdc"></div><div class="abs" style="left:939px;top:388px;width:1px;height:145px;background:#dcdcdc"></div><div class="abs" style="left:1014px;top:388px;width:1px;height:145px;background:#dcdcdc"></div><div class="abs" style="left:1097px;top:388px;width:1px;height:145px;background:#dcdcdc"></div><div class="abs" style="left:1172px;top:388px;width:1px;height:145px;background:#dcdcdc"></div>


<svg class="abs" style="left:745px;top:694px" width="15" height="15" viewBox="0 0 15 15"><circle cx="7.5" cy="7.5" r="6" fill="none" stroke="#2b8ae6" stroke-width="1.1"/><path d="M7.5 6.5v4.5" stroke="#2b8ae6" stroke-width="1.2"/><circle cx="7.5" cy="4.3" r=".8" fill="#2b8ae6"/></svg>
<div class="abs" style="left:766px;top:693px;font-size:12px;color:#111;line-height:16px;white-space:nowrap">双击表格项可以修改分类的名称和颜色，也可以设置当前分类</div>
</body></html>
